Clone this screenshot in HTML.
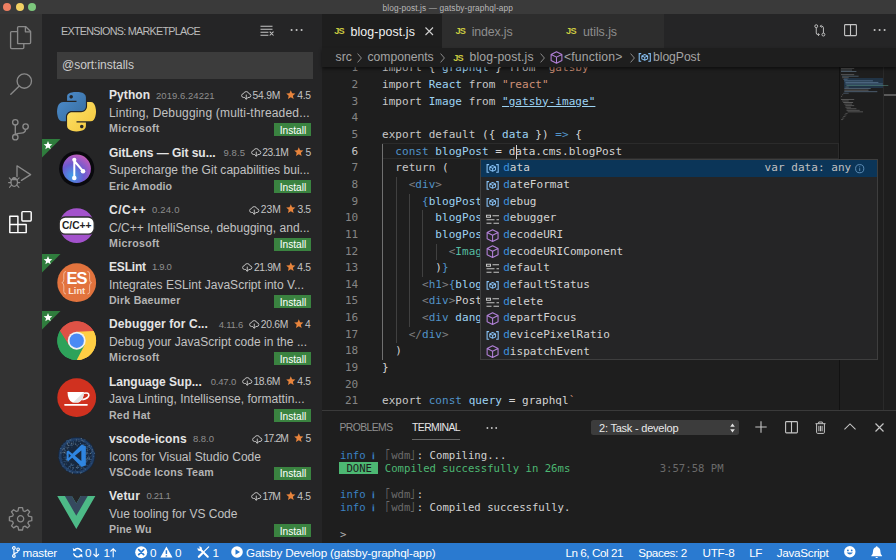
<!DOCTYPE html>
<html><head><meta charset="utf-8"><title>blog-post.js — gatsby-graphql-app</title>
<style>
*{box-sizing:border-box;margin:0;padding:0}
html,body{width:896px;height:560px;overflow:hidden;background:#1e1e1e}
body{position:relative;font-family:"Liberation Sans",sans-serif;color:#ccc;font-size:11px}
.abs,.t{position:absolute}
.t{white-space:pre;display:block}
svg{position:absolute;overflow:visible}
#title{left:0;top:0;width:896px;height:14px;background:#3a3a3a}
.dot{position:absolute;top:3.100px;width:8.300px;height:8.300px;border-radius:50%}
#act{left:0;top:14px;width:42px;height:529px;background:#333333}
#side{left:42px;top:14px;width:279.800px;height:529px;background:#252526}
#tabs{left:321.800px;top:14px;width:574.200px;height:34px;background:#252526}
.tab{position:absolute;top:14px;height:34px;background:#2d2d2d}
#bc{left:321.800px;top:48px;width:574.200px;height:19px;background:#1e1e1e;z-index:5;box-shadow:0 2px 3px rgba(0,0,0,.5)}
#status{left:0;top:542.600px;width:896px;height:17.400px;background:#2a7ad0}
#code{left:321.800px;top:66px;width:574.200px;height:344px;overflow:hidden;background:#1e1e1e}
</style></head><body>
<div id="title" class="abs">
<div class="dot" style="left:2.650px;background:#ee7f62"></div>
<div class="dot" style="left:15.750px;background:#f2d163"></div>
<div class="dot" style="left:28.100px;background:#7cc77c"></div>
<span class="t" style="left:382.5px;top:3.4px;font-size:8.3px;line-height:10.8px;height:10.8px;letter-spacing:0.111px;color:#b8b8b8;">blog-post.js — gatsby-graphql-app</span>
</div>
<div id="act" class="abs"></div><svg style="left:0;top:0" width="42" height="560" viewBox="0 0 42 560" fill="none" stroke="#8a8a8a" stroke-width="1.35" stroke-linejoin="round" stroke-linecap="round">
<!-- files -->
<path d="M17.6 43.6 V27.6 Q17.6 26.6 18.6 26.6 H25.6 L30.6 31.6 V42.6 Q30.6 43.6 29.6 43.6 Z"/>
<path d="M25.4 26.8 V31.8 H30.4"/>
<path d="M17.4 31.6 H11.6 Q10.6 31.6 10.6 32.6 V47.6 Q10.6 48.6 11.6 48.6 H22.8 Q23.8 48.6 23.8 47.6 V43.8"/>
<!-- search -->
<circle cx="24.3" cy="81" r="7.2"/>
<path d="M19 86.2 L10.8 94.3"/>
<!-- git -->
<circle cx="15.3" cy="122.3" r="2.7"/>
<circle cx="15.3" cy="137.2" r="2.7"/>
<circle cx="25.6" cy="126.6" r="2.7"/>
<path d="M15.3 125 V134.5 M25.6 129.3 Q25.6 133 21 133.2 Q16.6 133.4 15.6 134.6"/>
<!-- debug -->
<path d="M17 176.5 V165.8 L30.6 174.6 L21.5 180.4"/>
<ellipse cx="14.2" cy="182.3" rx="3.3" ry="4.1"/>
<path d="M11.6 179.6 H16.8 M10.9 182.6 H8.6 M17.5 182.6 H19.8 M11.3 179.8 L9.3 177.8 M17.1 179.8 L19.1 177.8 M11.5 185.2 L9.5 187.3 M16.9 185.2 L18.9 187.3 M12.6 178.4 Q14.2 176.6 15.8 178.4" stroke-width="1.1"/>
<!-- extensions (active) -->
<g stroke="#ffffff" stroke-width="1.45">
<path d="M9.8 216.2 H17.9 V232.6 H9.8 Z M17.9 224.4 H26.2 V232.6 H17.9 M9.8 224.4 H17.9"/>
<rect x="21.9" y="211.6" width="9.3" height="9.3" rx="0.8"/>
</g>
<!-- gear -->
<g transform="translate(20.6 518.8)">
<path d="M-1.9 -11.2 H1.9 L2.6 -8 L4.3 -7.3 L7 -9.1 L9.1 -7 L7.3 -4.3 L8 -2.6 L11.2 -1.9 V1.9 L8 2.6 L7.3 4.3 L9.1 7 L7 9.1 L4.3 7.3 L2.6 8 L1.9 11.2 H-1.9 L-2.6 8 L-4.3 7.3 L-7 9.1 L-9.1 7 L-7.3 4.3 L-8 2.6 L-11.2 1.9 V-1.9 L-8 -2.6 L-7.3 -4.3 L-9.1 -7 L-7 -9.1 L-4.3 -7.3 L-2.6 -8 Z" stroke-width="1.3"/>
<circle cx="0" cy="0" r="3.1" stroke-width="1.3"/>
</g>
</svg>
<div id="side" class="abs"></div>
<span class="t" style="left:61.0px;top:24.3px;font-size:10.8px;line-height:14.0px;height:14.0px;letter-spacing:-0.739px;color:#bbbbbb;">EXTENSIONS: MARKETPLACE</span>
<svg style="left:260.300px;top:25.300px" width="14" height="12" viewBox="0 0 14 12" fill="none" stroke="#c5c5c5" stroke-width="1.05"><path d="M0.5 1.2 H12.5 M0.5 4.2 H12.5 M0.5 7.2 H8.4 M0.5 10.2 H8.4 M9.700 6.700 L13.500 10.500 M13.500 6.700 L9.700 10.500"/></svg>
<svg style="left:290.300px;top:28.300px" width="14" height="4" viewBox="0 0 14 4" fill="#c5c5c5"><circle cx="1.6" cy="2" r="1.05"/><circle cx="6.6" cy="2" r="1.05"/><circle cx="11.6" cy="2" r="1.05"/></svg>
<div class="abs" style="left:57px;top:52px;width:256px;height:27px;background:#3c3c3c"></div>
<span class="t" style="left:62.0px;top:58.0px;font-size:12px;line-height:15.6px;height:15.6px;letter-spacing:-0.015px;color:#cccccc;">@sort:installs</span>
<svg style="left:57px;top:91.5px" width="39" height="39" viewBox="0 0 111 111"><defs><linearGradient id="pyb" x1="0" y1="0" x2="1" y2="1"><stop offset="0" stop-color="#4f8fcf"/><stop offset="1" stop-color="#356a9c"/></linearGradient><linearGradient id="pyy" x1="0" y1="0" x2="1" y2="1"><stop offset="0" stop-color="#ffe36a"/><stop offset="1" stop-color="#f2c53a"/></linearGradient></defs>
<path fill="url(#pyb)" d="M54.9 0c-4.6 0-9 .4-12.8 1.100C30.800 3.100 28.700 7.300 28.700 15v10.200h26.800v3.400H18.700c-7.800 0-14.600 4.700-16.700 13.600-2.500 10.200-2.600 16.600 0 27.200 1.900 7.900 6.400 13.600 14.200 13.600h9.200V70.800c0-8.800 7.600-16.600 16.700-16.600h26.800c7.400 0 13.400-6.100 13.400-13.600V15c0-7.300-6.100-12.700-13.400-13.900C64.300.3 59.500 0 54.900 0zM40.400 8.200c2.800 0 5 2.300 5 5.100 0 2.800-2.300 5.100-5 5.100-2.800 0-5-2.300-5-5.100 0-2.800 2.200-5.100 5-5.100z"/>
<path fill="url(#pyy)" d="M85.600 28.700v11.900c0 9.200-7.800 17-16.700 17H42.100c-7.300 0-13.400 6.300-13.400 13.600v25.500c0 7.300 6.300 11.500 13.400 13.600 8.500 2.500 16.600 2.900 26.800 0 6.700-1.900 13.400-5.900 13.400-13.600V86.500H55.500v-3.400h40.200c7.800 0 10.700-5.400 13.400-13.600 2.800-8.400 2.700-16.500 0-27.200-1.900-7.700-5.600-13.600-13.400-13.600H85.600zM70.500 93.300c2.800 0 5 2.300 5 5.100 0 2.800-2.300 5.100-5 5.100-2.800 0-5-2.300-5-5.100 0-2.800 2.300-5.100 5-5.100z"/></svg>
<span class="t" style="left:109.0px;top:88.3px;font-size:12px;line-height:15.6px;height:15.6px;letter-spacing:0.088px;color:#e4e4e4;font-weight:bold;">Python</span>
<span class="t" style="left:156.0px;top:89.6px;font-size:9.5px;line-height:12.3px;height:12.3px;letter-spacing:0.048px;color:#8e8e8e;">2019.6.24221</span>
<svg style="left:241px;top:91.1px" width="10.500" height="9" viewBox="0 0 21 18" fill="none" stroke="#c8c8c8" stroke-width="1.900" stroke-linecap="round" stroke-linejoin="round"><path d="M6.500 13 H5 Q1.200 12.600 1.200 9 Q1.400 5.600 5 5.300 Q6.300 1.200 10.500 1.200 Q14.800 1.300 16 5.500 Q19.800 5.800 19.800 9.300 Q19.600 12.700 16 13 H14.500"/><path d="M10.500 8 V16 M7.500 13.300 L10.500 16.500 L13.500 13.300"/></svg>
<span class="t" style="left:252.5px;top:88.9px;font-size:10.3px;line-height:13.4px;height:13.4px;letter-spacing:-0.185px;color:#c4c4c4;">54.9M</span>
<svg style="left:285.5px;top:89.9px" width="9.600" height="9.200" viewBox="0 0 24 23"><path d="M12 0.500 L15.300 8 L23.500 8.800 L17.300 14.300 L19.100 22.400 L12 18.200 L4.900 22.400 L6.700 14.300 L0.500 8.800 L8.700 8 Z" fill="#e8843c"/></svg>
<span class="t" style="left:297.2px;top:88.9px;font-size:10.3px;line-height:13.4px;height:13.4px;letter-spacing:-0.276px;color:#c4c4c4;">4.5</span>
<span class="t" style="left:109.0px;top:106.2px;font-size:12px;line-height:15.6px;height:15.6px;letter-spacing:0.178px;color:#c2c2c2;">Linting, Debugging (multi-threaded...</span>
<span class="t" style="left:109.0px;top:122.3px;font-size:10.6px;line-height:13.8px;height:13.8px;letter-spacing:0.336px;color:#b4b4b4;font-weight:bold;">Microsoft</span>
<div class="abs" style="left:274.2px;top:123.2px;width:36.800px;height:13px;background:#3a8340"></div>
<span class="t" style="left:279.7px;top:123.8px;font-size:10.2px;line-height:13.3px;height:13.3px;letter-spacing:-0.018px;color:#ffffff;">Install</span>
<svg style="left:57px;top:148.8px" width="39" height="39" viewBox="0 0 39 39"><defs><radialGradient id="gl1" cx="0.35" cy="0.75" r="0.9"><stop offset="0" stop-color="#3fa0e8"/><stop offset="0.45" stop-color="#6a5bd0"/><stop offset="0.8" stop-color="#b05ac0"/><stop offset="1" stop-color="#d873b0"/></radialGradient></defs>
<circle cx="19.7" cy="19.8" r="17.6" fill="#09090d"/><circle cx="19.7" cy="19.8" r="14.2" fill="url(#gl1)"/>
<g stroke="#ffffff" stroke-width="2" fill="none" stroke-linecap="round"><path d="M17.300 11.500 V28.500 M17.300 12 L25.500 21.500"/></g>
<circle cx="17.300" cy="10.800" r="2.100" fill="#fff"/><circle cx="17.300" cy="29" r="2.300" fill="#fff"/><circle cx="26" cy="22.300" r="2.300" fill="#fff"/></svg>
<svg style="left:42px;top:139.4px" width="19" height="19" viewBox="0 0 19 19"><path d="M0 0 H18.500 L0 18.500 Z" fill="#2f7d3d"/><path transform="translate(6.000 6.500) scale(0.42)" d="M0 -10.500 L2.900 -3.600 L10.300 -3.100 L4.600 1.700 L6.400 9 L0 5 L-6.400 9 L-4.600 1.700 L-10.300 -3.100 L-2.900 -3.600 Z" fill="#fff"/></svg>
<span class="t" style="left:109.0px;top:145.5px;font-size:12px;line-height:15.6px;height:15.6px;letter-spacing:-0.044px;color:#e4e4e4;font-weight:bold;">GitLens — Git su...</span>
<span class="t" style="left:223.5px;top:146.8px;font-size:9.5px;line-height:12.3px;height:12.3px;letter-spacing:0.072px;color:#8e8e8e;">9.8.5</span>
<svg style="left:251px;top:148.3px" width="10.500" height="9" viewBox="0 0 21 18" fill="none" stroke="#c8c8c8" stroke-width="1.900" stroke-linecap="round" stroke-linejoin="round"><path d="M6.500 13 H5 Q1.200 12.600 1.200 9 Q1.400 5.600 5 5.300 Q6.300 1.200 10.500 1.200 Q14.800 1.300 16 5.500 Q19.800 5.800 19.800 9.300 Q19.600 12.700 16 13 H14.500"/><path d="M10.500 8 V16 M7.500 13.300 L10.500 16.500 L13.500 13.300"/></svg>
<span class="t" style="left:262.2px;top:146.2px;font-size:10.3px;line-height:13.4px;height:13.4px;letter-spacing:-0.465px;color:#c4c4c4;">23.1M</span>
<svg style="left:294.2px;top:147.2px" width="9.600" height="9.200" viewBox="0 0 24 23"><path d="M12 0.500 L15.300 8 L23.500 8.800 L17.300 14.300 L19.100 22.400 L12 18.200 L4.900 22.400 L6.700 14.300 L0.500 8.800 L8.700 8 Z" fill="#e8843c"/></svg>
<span class="t" style="left:305.5px;top:146.2px;font-size:10.3px;line-height:13.4px;height:13.4px;letter-spacing:-0.534px;color:#c4c4c4;">5</span>
<span class="t" style="left:109.0px;top:163.4px;font-size:12px;line-height:15.6px;height:15.6px;letter-spacing:0.032px;color:#c2c2c2;">Supercharge the Git capabilities bui...</span>
<span class="t" style="left:109.0px;top:179.5px;font-size:10.6px;line-height:13.8px;height:13.8px;letter-spacing:0.108px;color:#b4b4b4;font-weight:bold;">Eric Amodio</span>
<div class="abs" style="left:274.2px;top:180.4px;width:36.800px;height:13px;background:#3a8340"></div>
<span class="t" style="left:279.7px;top:181.0px;font-size:10.2px;line-height:13.3px;height:13.3px;letter-spacing:-0.018px;color:#ffffff;">Install</span>
<svg style="left:57px;top:206.0px" width="39" height="39" viewBox="0 0 39 39"><circle cx="19.7" cy="19.600" r="17.400" fill="#a352cc"/>
<rect x="2.200" y="11" width="35" height="17.200" rx="6" fill="#ffffff" stroke="#2b2b2b" stroke-width="1.300"/>
<text x="19.700" y="23.300" text-anchor="middle" font-family="Liberation Sans,sans-serif" font-weight="bold" font-size="10.400" fill="#222" textLength="29.500" lengthAdjust="spacingAndGlyphs">C/C++</text></svg>
<span class="t" style="left:109.0px;top:202.8px;font-size:12px;line-height:15.6px;height:15.6px;letter-spacing:0.503px;color:#e4e4e4;font-weight:bold;">C/C++</span>
<span class="t" style="left:152.0px;top:204.1px;font-size:9.5px;line-height:12.3px;height:12.3px;letter-spacing:0.213px;color:#8e8e8e;">0.24.0</span>
<svg style="left:249px;top:205.6px" width="10.500" height="9" viewBox="0 0 21 18" fill="none" stroke="#c8c8c8" stroke-width="1.900" stroke-linecap="round" stroke-linejoin="round"><path d="M6.500 13 H5 Q1.200 12.600 1.200 9 Q1.400 5.600 5 5.300 Q6.300 1.200 10.500 1.200 Q14.800 1.300 16 5.500 Q19.800 5.800 19.800 9.300 Q19.600 12.700 16 13 H14.500"/><path d="M10.500 8 V16 M7.500 13.300 L10.500 16.500 L13.500 13.300"/></svg>
<span class="t" style="left:260.8px;top:203.4px;font-size:10.3px;line-height:13.4px;height:13.4px;letter-spacing:-0.044px;color:#c4c4c4;">23M</span>
<svg style="left:286.0px;top:204.4px" width="9.600" height="9.200" viewBox="0 0 24 23"><path d="M12 0.500 L15.300 8 L23.500 8.800 L17.300 14.300 L19.100 22.400 L12 18.200 L4.900 22.400 L6.700 14.300 L0.500 8.800 L8.700 8 Z" fill="#e8843c"/></svg>
<span class="t" style="left:297.6px;top:203.4px;font-size:10.3px;line-height:13.4px;height:13.4px;letter-spacing:-0.409px;color:#c4c4c4;">3.5</span>
<span class="t" style="left:109.0px;top:220.7px;font-size:12px;line-height:15.6px;height:15.6px;letter-spacing:0.033px;color:#c2c2c2;">C/C++ IntelliSense, debugging, and...</span>
<span class="t" style="left:109.0px;top:236.8px;font-size:10.6px;line-height:13.8px;height:13.8px;letter-spacing:0.336px;color:#b4b4b4;font-weight:bold;">Microsoft</span>
<div class="abs" style="left:274.2px;top:237.7px;width:36.800px;height:13px;background:#3a8340"></div>
<span class="t" style="left:279.7px;top:238.3px;font-size:10.2px;line-height:13.3px;height:13.3px;letter-spacing:-0.018px;color:#ffffff;">Install</span>
<svg style="left:57px;top:263.2px" width="39" height="39" viewBox="0 0 39 39"><circle cx="19.700" cy="19.700" r="19.400" fill="#e2733d"/>
<text x="19.400" y="20.600" text-anchor="middle" font-family="Liberation Sans,sans-serif" font-weight="bold" font-size="16.500" fill="#fff" letter-spacing="-1.200">ES</text>
<text x="19.700" y="31.300" text-anchor="middle" font-family="Liberation Sans,sans-serif" font-weight="bold" font-size="9.300" fill="#fbe3d6">Lint</text>
<g fill="none" stroke="#f3b79a" stroke-width="1"><path d="M9 8.500 Q6.800 8.500 6.800 11 V16.500 Q6.800 19.500 4.800 19.700 Q6.800 19.900 6.800 23 V28.500 Q6.800 31 9 31"/><path d="M30.400 8.500 Q32.600 8.500 32.600 11 V16.500 Q32.600 19.500 34.600 19.700 Q32.600 19.900 32.600 23 V28.500 Q32.600 31 30.400 31"/></g></svg>
<svg style="left:42px;top:253.9px" width="19" height="19" viewBox="0 0 19 19"><path d="M0 0 H18.500 L0 18.500 Z" fill="#2f7d3d"/><path transform="translate(6.000 6.500) scale(0.42)" d="M0 -10.500 L2.900 -3.600 L10.300 -3.100 L4.600 1.700 L6.400 9 L0 5 L-6.400 9 L-4.600 1.700 L-10.300 -3.100 L-2.900 -3.600 Z" fill="#fff"/></svg>
<span class="t" style="left:109.0px;top:260.0px;font-size:12px;line-height:15.6px;height:15.6px;letter-spacing:-0.183px;color:#e4e4e4;font-weight:bold;">ESLint</span>
<span class="t" style="left:152.0px;top:261.4px;font-size:9.5px;line-height:12.3px;height:12.3px;letter-spacing:-0.308px;color:#8e8e8e;">1.9.0</span>
<svg style="left:242px;top:262.9px" width="10.500" height="9" viewBox="0 0 21 18" fill="none" stroke="#c8c8c8" stroke-width="1.900" stroke-linecap="round" stroke-linejoin="round"><path d="M6.500 13 H5 Q1.200 12.600 1.200 9 Q1.400 5.600 5 5.300 Q6.300 1.200 10.500 1.200 Q14.800 1.300 16 5.500 Q19.800 5.800 19.800 9.300 Q19.600 12.700 16 13 H14.500"/><path d="M10.500 8 V16 M7.500 13.300 L10.500 16.500 L13.500 13.300"/></svg>
<span class="t" style="left:254.0px;top:260.7px;font-size:10.3px;line-height:13.4px;height:13.4px;letter-spacing:-0.385px;color:#c4c4c4;">21.9M</span>
<svg style="left:286.0px;top:261.6px" width="9.600" height="9.200" viewBox="0 0 24 23"><path d="M12 0.500 L15.300 8 L23.500 8.800 L17.300 14.300 L19.100 22.400 L12 18.200 L4.900 22.400 L6.700 14.300 L0.500 8.800 L8.700 8 Z" fill="#e8843c"/></svg>
<span class="t" style="left:297.2px;top:260.7px;font-size:10.3px;line-height:13.4px;height:13.4px;letter-spacing:-0.276px;color:#c4c4c4;">4.5</span>
<span class="t" style="left:109.0px;top:277.9px;font-size:12px;line-height:15.6px;height:15.6px;letter-spacing:0.017px;color:#c2c2c2;">Integrates ESLint JavaScript into V...</span>
<span class="t" style="left:109.0px;top:294.0px;font-size:10.6px;line-height:13.8px;height:13.8px;letter-spacing:0.217px;color:#b4b4b4;font-weight:bold;">Dirk Baeumer</span>
<div class="abs" style="left:274.2px;top:294.9px;width:36.800px;height:13px;background:#3a8340"></div>
<span class="t" style="left:279.7px;top:295.5px;font-size:10.2px;line-height:13.3px;height:13.3px;letter-spacing:-0.018px;color:#ffffff;">Install</span>
<svg style="left:57px;top:320.5px" width="39" height="39" viewBox="0 0 39 39"><path d="M19.7 19.7 L2.90 10.00 A19.4 19.4 0 0 1 36.50 10.00 Z" fill="#de5246"/><path d="M19.7 19.7 L36.50 10.00 A19.4 19.4 0 0 1 19.70 39.10 Z" fill="#ffce44"/><path d="M19.7 19.7 L19.70 39.10 A19.4 19.4 0 0 1 2.90 10.00 Z" fill="#2ea25a"/><path d="M2.90 10.00 L2.90 10.00 L11.91 24.20 L19.70 10.70 L36.50 10.00 A19.4 19.4 0 0 0 2.90 10.00Z" fill="#de5246"/><path d="M36.50 10.00 L19.70 10.70 L19.70 10.70 L27.49 24.20 L19.70 39.10 A19.4 19.4 0 0 0 36.50 10.00Z" fill="#ffce44"/><path d="M19.70 39.10 L27.49 24.20 L11.91 24.20 L2.90 10.00 A19.4 19.4 0 0 0 19.70 39.10Z" fill="#2ea25a"/><circle cx="19.7" cy="19.7" r="9" fill="#f1f1f1"/><circle cx="19.7" cy="19.7" r="7.200" fill="#4a8af4"/></svg>
<svg style="left:42px;top:311.2px" width="19" height="19" viewBox="0 0 19 19"><path d="M0 0 H18.500 L0 18.500 Z" fill="#2f7d3d"/><path transform="translate(6.000 6.500) scale(0.42)" d="M0 -10.500 L2.900 -3.600 L10.300 -3.100 L4.600 1.700 L6.400 9 L0 5 L-6.400 9 L-4.600 1.700 L-10.300 -3.100 L-2.900 -3.600 Z" fill="#fff"/></svg>
<span class="t" style="left:109.0px;top:317.3px;font-size:12px;line-height:15.6px;height:15.6px;letter-spacing:0.097px;color:#e4e4e4;font-weight:bold;">Debugger for C...</span>
<span class="t" style="left:218.8px;top:318.6px;font-size:9.5px;line-height:12.3px;height:12.3px;letter-spacing:-0.253px;color:#8e8e8e;">4.11.6</span>
<svg style="left:249.4px;top:320.1px" width="10.500" height="9" viewBox="0 0 21 18" fill="none" stroke="#c8c8c8" stroke-width="1.900" stroke-linecap="round" stroke-linejoin="round"><path d="M6.500 13 H5 Q1.200 12.600 1.200 9 Q1.400 5.600 5 5.300 Q6.300 1.200 10.500 1.200 Q14.800 1.300 16 5.500 Q19.800 5.800 19.800 9.300 Q19.600 12.700 16 13 H14.500"/><path d="M10.500 8 V16 M7.500 13.300 L10.500 16.500 L13.500 13.300"/></svg>
<span class="t" style="left:260.8px;top:317.9px;font-size:10.3px;line-height:13.4px;height:13.4px;letter-spacing:-0.285px;color:#c4c4c4;">20.6M</span>
<svg style="left:294.2px;top:318.9px" width="9.600" height="9.200" viewBox="0 0 24 23"><path d="M12 0.500 L15.300 8 L23.500 8.800 L17.300 14.300 L19.100 22.400 L12 18.200 L4.900 22.400 L6.700 14.300 L0.500 8.800 L8.700 8 Z" fill="#e8843c"/></svg>
<span class="t" style="left:305.0px;top:317.9px;font-size:10.3px;line-height:13.4px;height:13.4px;letter-spacing:-0.034px;color:#c4c4c4;">4</span>
<span class="t" style="left:109.0px;top:335.2px;font-size:12px;line-height:15.6px;height:15.6px;letter-spacing:0.033px;color:#c2c2c2;">Debug your JavaScript code in the ...</span>
<span class="t" style="left:109.0px;top:351.3px;font-size:10.6px;line-height:13.8px;height:13.8px;letter-spacing:0.336px;color:#b4b4b4;font-weight:bold;">Microsoft</span>
<div class="abs" style="left:274.2px;top:352.2px;width:36.800px;height:13px;background:#3a8340"></div>
<span class="t" style="left:279.7px;top:352.8px;font-size:10.2px;line-height:13.3px;height:13.3px;letter-spacing:-0.018px;color:#ffffff;">Install</span>
<svg style="left:57px;top:377.8px" width="39" height="39" viewBox="0 0 39 39"><circle cx="19.700" cy="19.700" r="19.400" fill="#d0311f"/>
<path d="M10.500 14 H27 Q26.800 22.500 21.500 24.500 H15.500 Q10.700 22.500 10.500 14 Z" fill="#fff"/>
<path d="M26.800 15.200 Q32.200 14.200 31.800 17.500 Q31.200 20.500 25.300 21.600" fill="none" stroke="#fff" stroke-width="1.600"/>
<path d="M8 26.800 H30" stroke="#fff" stroke-width="1.700" stroke-linecap="round"/>
<path d="M21 24.500 Q26.300 22 27 14 L16 24.500Z" fill="#e4e4e4"/></svg>
<span class="t" style="left:109.0px;top:374.5px;font-size:12px;line-height:15.6px;height:15.6px;letter-spacing:0.009px;color:#e4e4e4;font-weight:bold;">Language Sup...</span>
<span class="t" style="left:210.7px;top:375.9px;font-size:9.5px;line-height:12.3px;height:12.3px;letter-spacing:-0.187px;color:#8e8e8e;">0.47.0</span>
<svg style="left:242px;top:377.4px" width="10.500" height="9" viewBox="0 0 21 18" fill="none" stroke="#c8c8c8" stroke-width="1.900" stroke-linecap="round" stroke-linejoin="round"><path d="M6.500 13 H5 Q1.200 12.600 1.200 9 Q1.400 5.600 5 5.300 Q6.300 1.200 10.500 1.200 Q14.800 1.300 16 5.500 Q19.800 5.800 19.800 9.300 Q19.600 12.700 16 13 H14.500"/><path d="M10.500 8 V16 M7.500 13.300 L10.500 16.500 L13.500 13.300"/></svg>
<span class="t" style="left:253.4px;top:375.2px;font-size:10.3px;line-height:13.4px;height:13.4px;letter-spacing:-0.405px;color:#c4c4c4;">18.6M</span>
<svg style="left:286.0px;top:376.1px" width="9.600" height="9.200" viewBox="0 0 24 23"><path d="M12 0.500 L15.300 8 L23.500 8.800 L17.300 14.300 L19.100 22.400 L12 18.200 L4.900 22.400 L6.700 14.300 L0.500 8.800 L8.700 8 Z" fill="#e8843c"/></svg>
<span class="t" style="left:297.2px;top:375.2px;font-size:10.3px;line-height:13.4px;height:13.4px;letter-spacing:-0.276px;color:#c4c4c4;">4.5</span>
<span class="t" style="left:109.0px;top:392.4px;font-size:12px;line-height:15.6px;height:15.6px;letter-spacing:0.035px;color:#c2c2c2;">Java Linting, Intellisense, formattin...</span>
<span class="t" style="left:109.0px;top:408.5px;font-size:10.6px;line-height:13.8px;height:13.8px;letter-spacing:0.210px;color:#b4b4b4;font-weight:bold;">Red Hat</span>
<div class="abs" style="left:274.2px;top:409.4px;width:36.800px;height:13px;background:#3a8340"></div>
<span class="t" style="left:279.7px;top:410.0px;font-size:10.2px;line-height:13.3px;height:13.3px;letter-spacing:-0.018px;color:#ffffff;">Install</span>
<svg style="left:57px;top:435.9px" width="39" height="39" viewBox="0 0 39 39"><circle cx="19.700" cy="19.700" r="18.600" fill="#17283f"/><circle cx="19.700" cy="19.700" r="16.500" fill="none" stroke="#2a5288" stroke-width="2.500" opacity="0.550"/><circle cx="20.6" cy="30.0" r="0.52" fill="#6d7a84"/><circle cx="27.9" cy="24.9" r="0.67" fill="#41658c"/><circle cx="24.7" cy="4.5" r="0.53" fill="#5b6f80"/><circle cx="9.4" cy="32.1" r="0.44" fill="#3a5f86"/><circle cx="28.8" cy="16.3" r="0.63" fill="#2f4d70"/><circle cx="23.9" cy="31.1" r="0.38" fill="#2f4d70"/><circle cx="7.7" cy="10.3" r="0.44" fill="#41658c"/><circle cx="19.9" cy="31.6" r="0.64" fill="#41658c"/><circle cx="31.7" cy="20.2" r="0.65" fill="#2f4d70"/><circle cx="6.7" cy="19.0" r="0.45" fill="#41658c"/><circle cx="8.7" cy="23.2" r="0.63" fill="#2f4d70"/><circle cx="29.2" cy="22.4" r="0.53" fill="#2f4d70"/><circle cx="10.5" cy="7.3" r="0.70" fill="#5b6f80"/><circle cx="24.1" cy="32.0" r="0.57" fill="#5b6f80"/><circle cx="9.4" cy="23.7" r="0.61" fill="#6d7a84"/><circle cx="13.6" cy="32.6" r="0.39" fill="#2f4d70"/><circle cx="30.3" cy="24.0" r="0.57" fill="#41658c"/><circle cx="20.7" cy="32.0" r="0.45" fill="#5b6f80"/><circle cx="32.1" cy="21.7" r="0.66" fill="#3a5f86"/><circle cx="34.8" cy="15.3" r="0.36" fill="#2f4d70"/><circle cx="15.4" cy="36.9" r="0.65" fill="#6d7a84"/><circle cx="30.1" cy="8.5" r="0.45" fill="#3a5f86"/><circle cx="24.5" cy="32.1" r="0.44" fill="#5b6f80"/><circle cx="10.9" cy="13.4" r="0.35" fill="#41658c"/><circle cx="30.2" cy="22.7" r="0.70" fill="#2f4d70"/><circle cx="7.8" cy="14.0" r="0.50" fill="#5b6f80"/><circle cx="22.3" cy="29.4" r="0.61" fill="#3a5f86"/><circle cx="5.1" cy="9.7" r="0.36" fill="#41658c"/><circle cx="8.1" cy="20.4" r="0.39" fill="#3a5f86"/><circle cx="3.9" cy="16.8" r="0.58" fill="#6d7a84"/><circle cx="23.1" cy="30.4" r="0.49" fill="#6d7a84"/><circle cx="32.4" cy="22.7" r="0.58" fill="#5b6f80"/><circle cx="9.5" cy="24.7" r="0.36" fill="#5b6f80"/><circle cx="19.4" cy="31.3" r="0.62" fill="#5b6f80"/><circle cx="9.5" cy="25.5" r="0.37" fill="#2f4d70"/><circle cx="32.6" cy="13.4" r="0.49" fill="#41658c"/><circle cx="31.9" cy="10.9" r="0.52" fill="#3a5f86"/><circle cx="29.1" cy="25.9" r="0.66" fill="#41658c"/><circle cx="30.7" cy="14.1" r="0.63" fill="#6d7a84"/><circle cx="9.4" cy="6.9" r="0.43" fill="#41658c"/><circle cx="24.9" cy="4.2" r="0.67" fill="#2f4d70"/><circle cx="29.5" cy="17.0" r="0.69" fill="#2f4d70"/><circle cx="14.9" cy="11.1" r="0.39" fill="#41658c"/><circle cx="34.6" cy="16.7" r="0.65" fill="#3a5f86"/><circle cx="14.6" cy="7.3" r="0.61" fill="#6d7a84"/><circle cx="29.9" cy="14.7" r="0.42" fill="#3a5f86"/><circle cx="27.8" cy="31.9" r="0.39" fill="#2f4d70"/><circle cx="25.6" cy="4.7" r="0.54" fill="#5b6f80"/><circle cx="27.8" cy="12.0" r="0.47" fill="#41658c"/><circle cx="32.2" cy="9.6" r="0.67" fill="#6d7a84"/><circle cx="10.3" cy="23.5" r="0.39" fill="#41658c"/><circle cx="8.9" cy="15.3" r="0.36" fill="#5b6f80"/><circle cx="34.6" cy="27.8" r="0.45" fill="#3a5f86"/><circle cx="13.9" cy="28.0" r="0.51" fill="#41658c"/><circle cx="24.6" cy="36.8" r="0.43" fill="#6d7a84"/><circle cx="2.0" cy="21.2" r="0.38" fill="#3a5f86"/><circle cx="33.8" cy="11.5" r="0.53" fill="#2f4d70"/><circle cx="4.3" cy="26.5" r="0.37" fill="#6d7a84"/><circle cx="27.9" cy="12.1" r="0.68" fill="#2f4d70"/><circle cx="9.3" cy="21.1" r="0.41" fill="#41658c"/><circle cx="27.4" cy="11.9" r="0.46" fill="#5b6f80"/><circle cx="27.1" cy="10.7" r="0.60" fill="#3a5f86"/><circle cx="31.8" cy="20.1" r="0.39" fill="#41658c"/><circle cx="23.0" cy="5.5" r="0.38" fill="#41658c"/><circle cx="20.2" cy="36.4" r="0.43" fill="#2f4d70"/><circle cx="26.8" cy="35.0" r="0.59" fill="#3a5f86"/><circle cx="10.3" cy="12.0" r="0.62" fill="#6d7a84"/><circle cx="3.8" cy="12.4" r="0.63" fill="#41658c"/><circle cx="9.6" cy="11.1" r="0.44" fill="#5b6f80"/><circle cx="5.0" cy="9.5" r="0.40" fill="#2f4d70"/><circle cx="29.0" cy="25.0" r="0.41" fill="#41658c"/><circle cx="30.0" cy="12.4" r="0.63" fill="#41658c"/><circle cx="12.0" cy="4.5" r="0.49" fill="#3a5f86"/><circle cx="29.9" cy="15.4" r="0.46" fill="#2f4d70"/><circle cx="16.7" cy="28.9" r="0.53" fill="#3a5f86"/><circle cx="20.0" cy="9.5" r="0.63" fill="#2f4d70"/><circle cx="30.1" cy="16.6" r="0.70" fill="#41658c"/><circle cx="10.2" cy="4.5" r="0.62" fill="#3a5f86"/><circle cx="30.0" cy="17.6" r="0.59" fill="#6d7a84"/><circle cx="19.3" cy="5.0" r="0.65" fill="#2f4d70"/><circle cx="13.2" cy="4.0" r="0.66" fill="#5b6f80"/><circle cx="16.2" cy="8.1" r="0.61" fill="#5b6f80"/><circle cx="6.1" cy="16.5" r="0.66" fill="#6d7a84"/><circle cx="9.2" cy="27.3" r="0.45" fill="#2f4d70"/><circle cx="11.5" cy="24.8" r="0.66" fill="#5b6f80"/><circle cx="5.9" cy="23.4" r="0.49" fill="#2f4d70"/><circle cx="12.3" cy="26.0" r="0.37" fill="#41658c"/><circle cx="37.4" cy="16.8" r="0.56" fill="#2f4d70"/><circle cx="15.8" cy="29.2" r="0.52" fill="#2f4d70"/><circle cx="11.1" cy="9.3" r="0.62" fill="#41658c"/><circle cx="26.5" cy="29.0" r="0.40" fill="#2f4d70"/><circle cx="32.0" cy="23.4" r="0.59" fill="#41658c"/><circle cx="2.8" cy="14.5" r="0.36" fill="#2f4d70"/><circle cx="20.2" cy="35.6" r="0.36" fill="#5b6f80"/><circle cx="15.4" cy="29.3" r="0.66" fill="#3a5f86"/><circle cx="10.6" cy="8.2" r="0.61" fill="#5b6f80"/><circle cx="9.8" cy="5.1" r="0.55" fill="#3a5f86"/><circle cx="14.3" cy="5.0" r="0.40" fill="#41658c"/><circle cx="10.1" cy="25.7" r="0.52" fill="#2f4d70"/><circle cx="29.7" cy="24.2" r="0.53" fill="#2f4d70"/><circle cx="8.0" cy="16.9" r="0.46" fill="#6d7a84"/><circle cx="9.8" cy="28.2" r="0.45" fill="#3a5f86"/><circle cx="14.3" cy="8.9" r="0.38" fill="#5b6f80"/><circle cx="30.7" cy="29.5" r="0.43" fill="#3a5f86"/><circle cx="6.9" cy="15.2" r="0.41" fill="#41658c"/><circle cx="27.9" cy="3.7" r="0.47" fill="#6d7a84"/><circle cx="26.2" cy="32.1" r="0.39" fill="#5b6f80"/><circle cx="7.1" cy="8.0" r="0.68" fill="#2f4d70"/><circle cx="26.1" cy="8.4" r="0.64" fill="#3a5f86"/><circle cx="23.1" cy="33.7" r="0.46" fill="#41658c"/><circle cx="31.4" cy="10.7" r="0.63" fill="#2f4d70"/><circle cx="29.7" cy="25.5" r="0.66" fill="#2f4d70"/><circle cx="11.3" cy="6.8" r="0.46" fill="#41658c"/><circle cx="2.3" cy="22.3" r="0.41" fill="#3a5f86"/><circle cx="33.1" cy="23.4" r="0.60" fill="#41658c"/><circle cx="34.5" cy="23.4" r="0.62" fill="#2f4d70"/><circle cx="32.6" cy="11.3" r="0.53" fill="#3a5f86"/><circle cx="32.3" cy="9.1" r="0.38" fill="#3a5f86"/><circle cx="21.5" cy="31.4" r="0.66" fill="#3a5f86"/><circle cx="29.2" cy="18.1" r="0.42" fill="#5b6f80"/><circle cx="19.8" cy="35.5" r="0.64" fill="#2f4d70"/><circle cx="15.9" cy="31.9" r="0.49" fill="#41658c"/><circle cx="26.1" cy="31.8" r="0.61" fill="#3a5f86"/><circle cx="27.5" cy="10.6" r="0.63" fill="#2f4d70"/><circle cx="16.0" cy="7.0" r="0.43" fill="#5b6f80"/><circle cx="6.6" cy="21.5" r="0.47" fill="#2f4d70"/><circle cx="34.5" cy="10.1" r="0.46" fill="#6d7a84"/><circle cx="11.2" cy="11.7" r="0.38" fill="#41658c"/><circle cx="7.7" cy="28.1" r="0.56" fill="#5b6f80"/><circle cx="13.0" cy="35.8" r="0.57" fill="#5b6f80"/><circle cx="14.4" cy="3.1" r="0.58" fill="#2f4d70"/><circle cx="30.3" cy="11.0" r="0.58" fill="#3a5f86"/><circle cx="34.0" cy="20.4" r="0.41" fill="#5b6f80"/><circle cx="20.3" cy="36.4" r="0.63" fill="#3a5f86"/><circle cx="12.9" cy="35.2" r="0.58" fill="#41658c"/><circle cx="28.2" cy="14.1" r="0.66" fill="#5b6f80"/><circle cx="19.4" cy="3.8" r="0.59" fill="#5b6f80"/><circle cx="18.5" cy="34.2" r="0.61" fill="#2f4d70"/><circle cx="21.8" cy="3.2" r="0.41" fill="#5b6f80"/><circle cx="23.5" cy="36.9" r="0.59" fill="#5b6f80"/><circle cx="29.6" cy="18.4" r="0.60" fill="#2f4d70"/><circle cx="11.5" cy="5.2" r="0.65" fill="#3a5f86"/><circle cx="23.5" cy="7.4" r="0.54" fill="#41658c"/><circle cx="7.5" cy="16.5" r="0.64" fill="#6d7a84"/><circle cx="20.2" cy="9.9" r="0.48" fill="#5b6f80"/><circle cx="16.1" cy="31.8" r="0.68" fill="#5b6f80"/><circle cx="14.1" cy="8.2" r="0.60" fill="#41658c"/><circle cx="30.1" cy="15.9" r="0.41" fill="#2f4d70"/><circle cx="10.2" cy="17.6" r="0.42" fill="#3a5f86"/><circle cx="26.9" cy="5.7" r="0.52" fill="#41658c"/><circle cx="31.4" cy="22.8" r="0.41" fill="#6d7a84"/><circle cx="34.4" cy="19.3" r="0.47" fill="#2f4d70"/><circle cx="9.6" cy="23.2" r="0.61" fill="#3a5f86"/><circle cx="33.5" cy="12.4" r="0.39" fill="#5b6f80"/><circle cx="15.7" cy="33.4" r="0.52" fill="#3a5f86"/><circle cx="33.5" cy="17.4" r="0.64" fill="#5b6f80"/><circle cx="20.4" cy="32.0" r="0.60" fill="#3a5f86"/><circle cx="32.8" cy="21.6" r="0.40" fill="#41658c"/><circle cx="30.4" cy="22.6" r="0.43" fill="#2f4d70"/><circle cx="18.8" cy="5.6" r="0.41" fill="#2f4d70"/><circle cx="11.1" cy="32.3" r="0.58" fill="#41658c"/><circle cx="8.5" cy="14.2" r="0.47" fill="#41658c"/><circle cx="6.0" cy="16.4" r="0.55" fill="#2f4d70"/><circle cx="28.0" cy="8.8" r="0.38" fill="#3a5f86"/><circle cx="11.9" cy="11.7" r="0.40" fill="#5b6f80"/><circle cx="16.2" cy="5.6" r="0.54" fill="#3a5f86"/><circle cx="9.8" cy="34.1" r="0.62" fill="#3a5f86"/><circle cx="8.5" cy="11.1" r="0.57" fill="#2f4d70"/><circle cx="14.9" cy="36.0" r="0.42" fill="#2f4d70"/><circle cx="8.0" cy="21.7" r="0.66" fill="#3a5f86"/><circle cx="16.6" cy="32.4" r="0.47" fill="#3a5f86"/><circle cx="5.9" cy="9.2" r="0.38" fill="#2f4d70"/><circle cx="10.4" cy="23.8" r="0.63" fill="#6d7a84"/><circle cx="30.7" cy="22.0" r="0.64" fill="#5b6f80"/><circle cx="24.8" cy="36.2" r="0.70" fill="#3a5f86"/><circle cx="29.2" cy="20.3" r="0.53" fill="#2f4d70"/><circle cx="9.8" cy="18.1" r="0.57" fill="#41658c"/><circle cx="12.4" cy="6.8" r="0.59" fill="#41658c"/><circle cx="29.0" cy="23.5" r="0.50" fill="#5b6f80"/><circle cx="26.5" cy="27.5" r="0.46" fill="#41658c"/><circle cx="13.4" cy="29.7" r="0.55" fill="#41658c"/><circle cx="6.7" cy="12.6" r="0.68" fill="#41658c"/><circle cx="28.5" cy="33.1" r="0.58" fill="#41658c"/><circle cx="21.9" cy="5.3" r="0.53" fill="#5b6f80"/><circle cx="8.4" cy="17.1" r="0.51" fill="#41658c"/><circle cx="37.6" cy="17.5" r="0.54" fill="#41658c"/><circle cx="7.2" cy="12.7" r="0.44" fill="#5b6f80"/><circle cx="7.4" cy="12.2" r="0.68" fill="#41658c"/><circle cx="7.9" cy="23.4" r="0.41" fill="#2f4d70"/><circle cx="35.8" cy="15.3" r="0.54" fill="#5b6f80"/><circle cx="11.0" cy="11.8" r="0.46" fill="#5b6f80"/><circle cx="30.3" cy="7.4" r="0.57" fill="#2f4d70"/><circle cx="24.3" cy="32.1" r="0.36" fill="#2f4d70"/><circle cx="36.6" cy="20.3" r="0.66" fill="#3a5f86"/><circle cx="15.2" cy="9.6" r="0.48" fill="#5b6f80"/><circle cx="11.8" cy="9.6" r="0.68" fill="#6d7a84"/><circle cx="7.1" cy="25.4" r="0.63" fill="#2f4d70"/><circle cx="27.9" cy="25.4" r="0.49" fill="#3a5f86"/><circle cx="27.6" cy="32.8" r="0.55" fill="#3a5f86"/><circle cx="32.0" cy="17.7" r="0.66" fill="#2f4d70"/><circle cx="28.1" cy="28.9" r="0.62" fill="#3a5f86"/><circle cx="7.4" cy="13.7" r="0.50" fill="#41658c"/><circle cx="18.2" cy="7.0" r="0.51" fill="#3a5f86"/><circle cx="4.0" cy="17.2" r="0.45" fill="#3a5f86"/><circle cx="29.1" cy="29.2" r="0.62" fill="#2f4d70"/><circle cx="28.8" cy="11.5" r="0.66" fill="#2f4d70"/><circle cx="6.0" cy="30.2" r="0.63" fill="#3a5f86"/><circle cx="12.8" cy="30.4" r="0.64" fill="#41658c"/><circle cx="16.5" cy="6.9" r="0.66" fill="#2f4d70"/><circle cx="6.6" cy="12.9" r="0.45" fill="#6d7a84"/><circle cx="14.7" cy="28.1" r="0.56" fill="#5b6f80"/><circle cx="21.5" cy="8.4" r="0.47" fill="#41658c"/><circle cx="8.2" cy="25.8" r="0.52" fill="#3a5f86"/><circle cx="35.2" cy="13.8" r="0.62" fill="#6d7a84"/><circle cx="4.2" cy="22.7" r="0.42" fill="#2f4d70"/><circle cx="14.3" cy="29.1" r="0.60" fill="#41658c"/><circle cx="5.8" cy="13.8" r="0.62" fill="#6d7a84"/><circle cx="24.3" cy="2.6" r="0.61" fill="#6d7a84"/><circle cx="11.7" cy="31.0" r="0.61" fill="#3a5f86"/><circle cx="14.0" cy="9.5" r="0.59" fill="#41658c"/><circle cx="30.1" cy="10.3" r="0.51" fill="#3a5f86"/><circle cx="14.1" cy="6.5" r="0.37" fill="#5b6f80"/><circle cx="26.4" cy="5.1" r="0.46" fill="#5b6f80"/><circle cx="13.4" cy="31.4" r="0.45" fill="#5b6f80"/><circle cx="29.1" cy="23.2" r="0.39" fill="#6d7a84"/><circle cx="18.7" cy="8.2" r="0.63" fill="#6d7a84"/><circle cx="33.3" cy="25.4" r="0.42" fill="#5b6f80"/><circle cx="28.1" cy="8.7" r="0.43" fill="#5b6f80"/><circle cx="33.2" cy="20.9" r="0.44" fill="#2f4d70"/><circle cx="10.9" cy="25.6" r="0.58" fill="#2f4d70"/>
<path transform="translate(19.700 19.700) scale(1.130 1.200) translate(-19.400 -19.700)" d="M27.500 11.800 L23.800 10.300 L15.500 18 L12 15.300 L10.500 16.200 V23.200 L12 24.100 L15.500 21.400 L23.800 29.100 L27.500 27.600 Z M23.500 15.300 V24.100 L17.800 19.700 Z M12.300 17.800 L14.300 19.700 L12.300 21.600 Z" fill="#2f85e0" fill-rule="evenodd"/></svg>
<span class="t" style="left:109.0px;top:431.8px;font-size:12px;line-height:15.6px;height:15.6px;letter-spacing:0.083px;color:#e4e4e4;font-weight:bold;">vscode-icons</span>
<span class="t" style="left:193.0px;top:433.1px;font-size:9.5px;line-height:12.3px;height:12.3px;letter-spacing:-0.028px;color:#8e8e8e;">8.8.0</span>
<svg style="left:252px;top:434.6px" width="10.500" height="9" viewBox="0 0 21 18" fill="none" stroke="#c8c8c8" stroke-width="1.900" stroke-linecap="round" stroke-linejoin="round"><path d="M6.500 13 H5 Q1.200 12.600 1.200 9 Q1.400 5.600 5 5.300 Q6.300 1.200 10.500 1.200 Q14.800 1.300 16 5.500 Q19.800 5.800 19.800 9.300 Q19.600 12.700 16 13 H14.500"/><path d="M10.500 8 V16 M7.500 13.300 L10.500 16.500 L13.500 13.300"/></svg>
<span class="t" style="left:263.7px;top:432.4px;font-size:10.3px;line-height:13.4px;height:13.4px;letter-spacing:-0.865px;color:#c4c4c4;">17.2M</span>
<svg style="left:294.2px;top:433.4px" width="9.600" height="9.200" viewBox="0 0 24 23"><path d="M12 0.500 L15.300 8 L23.500 8.800 L17.300 14.300 L19.100 22.400 L12 18.200 L4.900 22.400 L6.700 14.300 L0.500 8.800 L8.700 8 Z" fill="#e8843c"/></svg>
<span class="t" style="left:305.5px;top:432.4px;font-size:10.3px;line-height:13.4px;height:13.4px;letter-spacing:-0.534px;color:#c4c4c4;">5</span>
<span class="t" style="left:109.0px;top:449.7px;font-size:12px;line-height:15.6px;height:15.6px;letter-spacing:0.028px;color:#c2c2c2;">Icons for Visual Studio Code</span>
<span class="t" style="left:109.0px;top:465.8px;font-size:10.6px;line-height:13.8px;height:13.8px;letter-spacing:0.232px;color:#b4b4b4;font-weight:bold;">VSCode Icons Team</span>
<div class="abs" style="left:274.2px;top:466.7px;width:36.800px;height:13px;background:#3a8340"></div>
<span class="t" style="left:279.7px;top:467.3px;font-size:10.2px;line-height:13.3px;height:13.3px;letter-spacing:-0.018px;color:#ffffff;">Install</span>
<svg style="left:57.4px;top:495.8px" width="38.600" height="33.000" viewBox="0 0 261.76 226.69"><path d="M161.096 0 L130.872 52.352 L100.647 0 H0 L130.872 226.688 L261.744 0 Z" fill="#4dba87"/><path d="M161.096 0 L130.872 52.352 L100.647 0 H52.346 L130.872 136.010 L209.398 0 Z" fill="#35495e"/></svg>
<span class="t" style="left:109.0px;top:489.0px;font-size:12px;line-height:15.6px;height:15.6px;letter-spacing:0.197px;color:#e4e4e4;font-weight:bold;">Vetur</span>
<span class="t" style="left:146.6px;top:490.4px;font-size:9.5px;line-height:12.3px;height:12.3px;letter-spacing:-0.420px;color:#8e8e8e;">0.21.1</span>
<svg style="left:251.2px;top:491.9px" width="10.500" height="9" viewBox="0 0 21 18" fill="none" stroke="#c8c8c8" stroke-width="1.900" stroke-linecap="round" stroke-linejoin="round"><path d="M6.500 13 H5 Q1.200 12.600 1.200 9 Q1.400 5.600 5 5.300 Q6.300 1.200 10.500 1.200 Q14.800 1.300 16 5.500 Q19.800 5.800 19.800 9.300 Q19.600 12.700 16 13 H14.500"/><path d="M10.500 8 V16 M7.500 13.300 L10.500 16.500 L13.500 13.300"/></svg>
<span class="t" style="left:262.6px;top:489.7px;font-size:10.3px;line-height:13.4px;height:13.4px;letter-spacing:-0.877px;color:#c4c4c4;">17M</span>
<svg style="left:286.0px;top:490.6px" width="9.600" height="9.200" viewBox="0 0 24 23"><path d="M12 0.500 L15.300 8 L23.500 8.800 L17.300 14.300 L19.100 22.400 L12 18.200 L4.900 22.400 L6.700 14.300 L0.500 8.800 L8.700 8 Z" fill="#e8843c"/></svg>
<span class="t" style="left:297.2px;top:489.7px;font-size:10.3px;line-height:13.4px;height:13.4px;letter-spacing:-0.276px;color:#c4c4c4;">4.5</span>
<span class="t" style="left:109.0px;top:506.9px;font-size:12px;line-height:15.6px;height:15.6px;letter-spacing:0.008px;color:#c2c2c2;">Vue tooling for VS Code</span>
<span class="t" style="left:109.0px;top:523.0px;font-size:10.6px;line-height:13.8px;height:13.8px;letter-spacing:0.127px;color:#b4b4b4;font-weight:bold;">Pine Wu</span>
<div class="abs" style="left:274.2px;top:524.0px;width:36.800px;height:13px;background:#3a8340"></div>
<span class="t" style="left:279.7px;top:524.5px;font-size:10.2px;line-height:13.3px;height:13.3px;letter-spacing:-0.018px;color:#ffffff;">Install</span>
<div id="tabs" class="abs"></div>
<div class="tab" style="left:321.800px;width:120.200px;background:#1e1e1e"></div>
<div class="tab" style="left:442px;width:111px"></div>
<div class="tab" style="left:553px;width:111px"></div>
<span class="t" style="left:334.3px;top:24.8px;font-size:9.2px;line-height:12.0px;height:12.0px;letter-spacing:-0.825px;color:#cbcb41;font-weight:bold;">JS</span>
<span class="t" style="left:350.5px;top:23.6px;font-size:12.4px;line-height:16.1px;height:16.1px;letter-spacing:0.094px;color:#f0f0f0;">blog-post.js</span>
<svg style="left:424.500px;top:27.100px" width="8.500" height="8.500" viewBox="0 0 8.500 8.500" stroke="#d0d0d0" stroke-width="1.100" fill="none"><path d="M0.500 0.500 L8 8 M8 0.500 L0.500 8"/></svg>
<span class="t" style="left:455.5px;top:24.8px;font-size:9.2px;line-height:12.0px;height:12.0px;letter-spacing:-0.825px;color:#cbcb41;font-weight:bold;">JS</span>
<span class="t" style="left:471.7px;top:23.5px;font-size:12.4px;line-height:16.1px;height:16.1px;letter-spacing:-0.152px;color:#8d8d8d;">index.js</span>
<span class="t" style="left:566.1px;top:24.8px;font-size:9.2px;line-height:12.0px;height:12.0px;letter-spacing:-0.825px;color:#cbcb41;font-weight:bold;">JS</span>
<span class="t" style="left:583.0px;top:23.5px;font-size:12.4px;line-height:16.1px;height:16.1px;letter-spacing:-0.055px;color:#8d8d8d;">utils.js</span>
<svg style="left:814.200px;top:23.700px" width="12" height="12.800" viewBox="0 0 14 15" fill="none" stroke="#c5c5c5" stroke-width="1.100"><circle cx="2.600" cy="2.600" r="1.700"/><circle cx="11" cy="12.400" r="1.700"/><path d="M2.600 4.300 V10.500 Q2.600 12.400 4.600 12.400 H6 M4.700 10.800 L6.300 12.400 L4.700 14 M11 10.700 V4.500 Q11 2.600 9 2.600 H7.600 M8.900 1 L7.300 2.600 L8.900 4.200"/></svg>
<svg style="left:843.500px;top:23.700px" width="13" height="12.200" viewBox="0 0 13 12.200" fill="none" stroke="#c5c5c5" stroke-width="1.100"><rect x="0.600" y="0.600" width="11.800" height="11" rx="0.800"/><path d="M6.500 0.600 V11.600"/></svg>
<svg style="left:872.500px;top:28.300px" width="14" height="4" viewBox="0 0 14 4" fill="#c5c5c5"><circle cx="1.600" cy="2" r="1.050"/><circle cx="6.600" cy="2" r="1.050"/><circle cx="11.600" cy="2" r="1.050"/></svg>
<div id="bc" class="abs"></div>
<span class="t" style="left:335.5px;top:50.0px;font-size:12.2px;line-height:15.9px;height:15.9px;letter-spacing:0.083px;color:#a4a4a4;z-index:6;">src</span>
<svg style="left:357px;top:52.800px;z-index:6" width="5" height="10" viewBox="0 0 5 10" fill="none" stroke="#8a8a8a" stroke-width="1"><path d="M0.600 0.600 L4.400 5 L0.600 9.400"/></svg>
<span class="t" style="left:367.5px;top:50.0px;font-size:12.2px;line-height:15.9px;height:15.9px;letter-spacing:-0.021px;color:#a4a4a4;z-index:6;">components</span>
<svg style="left:439.5px;top:52.800px;z-index:6" width="5" height="10" viewBox="0 0 5 10" fill="none" stroke="#8a8a8a" stroke-width="1"><path d="M0.600 0.600 L4.400 5 L0.600 9.400"/></svg>
<span class="t" style="left:453.3px;top:52.1px;font-size:9.2px;line-height:12.0px;height:12.0px;letter-spacing:-0.825px;color:#cbcb41;font-weight:bold;z-index:6;">JS</span>
<span class="t" style="left:469.5px;top:50.0px;font-size:12.2px;line-height:15.9px;height:15.9px;letter-spacing:0.156px;color:#a4a4a4;z-index:6;">blog-post.js</span>
<svg style="left:539.5px;top:52.800px;z-index:6" width="5" height="10" viewBox="0 0 5 10" fill="none" stroke="#8a8a8a" stroke-width="1"><path d="M0.600 0.600 L4.400 5 L0.600 9.400"/></svg>
<svg style="left:549.6px;top:50.5px;z-index:6" width="13" height="13" viewBox="0 0 14 14" fill="none" stroke="#b180d7" stroke-width="1.150" stroke-linejoin="round"><path d="M7 0.800 L12.800 3.700 V10.300 L7 13.200 L1.200 10.300 V3.700 Z M1.200 3.700 L7 6.600 L12.800 3.700 M7 6.600 V13.200"/></svg>
<span class="t" style="left:564.0px;top:50.0px;font-size:12.2px;line-height:15.9px;height:15.9px;letter-spacing:0.158px;color:#a4a4a4;z-index:6;">&lt;function&gt;</span>
<svg style="left:629.5px;top:52.800px;z-index:6" width="5" height="10" viewBox="0 0 5 10" fill="none" stroke="#8a8a8a" stroke-width="1"><path d="M0.600 0.600 L4.400 5 L0.600 9.400"/></svg>
<svg style="left:637.8px;top:53.0px;z-index:6" width="13.5" height="8.8" viewBox="0 0 14 10" fill="none" stroke="#86c0f4" stroke-width="1.250"><path d="M3 0.700 H0.700 V9.300 H3 M11 0.700 H13.300 V9.300 H11"/><path d="M7 1.700 L10.300 3.300 V6.700 L7 8.300 L3.700 6.700 V3.300 Z M3.700 3.300 L7 5 L10.300 3.300 M7 5 V8.300" stroke-width="1.150" stroke-linejoin="round"/></svg>
<span class="t" style="left:653.0px;top:50.0px;font-size:12.2px;line-height:15.9px;height:15.9px;letter-spacing:-0.055px;color:#a4a4a4;z-index:6;">blogPost</span>
<div id="code" class="abs"></div>
<div class="abs" style="left:382px;top:142.53px;width:457px;height:16.65px;border:1px solid #2b2b2b"></div>
<div class="abs" style="left:382.4px;top:143.62px;width:1px;height:216.45px;background:#707070"></div>
<div class="abs" style="left:395.7px;top:176.92px;width:1px;height:166.50px;background:#404040"></div>
<div class="abs" style="left:409.1px;top:193.57px;width:1px;height:133.20px;background:#404040"></div>
<div class="abs" style="left:422.4px;top:210.22px;width:1px;height:66.60px;background:#404040"></div>
<div class="abs" style="left:435.7px;top:243.53px;width:1px;height:16.65px;background:#404040"></div>
<span class="t" style="font-family:'DejaVu Sans Mono','Liberation Mono',monospace;left:320px;width:38.200px;text-align:right;top:60.37px;height:16.65px;line-height:16.65px;font-size:11px;color:#858585">1</span>
<span class="t" style="font-family:'DejaVu Sans Mono','Liberation Mono',monospace;left:382.00px;top:60.37px;height:16.65px;line-height:16.65px;font-size:11px;letter-spacing:0.046px;color:#c8c8c8;">import</span>
<span class="t" style="font-family:'DejaVu Sans Mono','Liberation Mono',monospace;left:428.68px;top:60.37px;height:16.65px;line-height:16.65px;font-size:11px;letter-spacing:0.046px;color:#d4d4d4;">{</span>
<span class="t" style="font-family:'DejaVu Sans Mono','Liberation Mono',monospace;left:442.01px;top:60.37px;height:16.65px;line-height:16.65px;font-size:11px;letter-spacing:0.046px;color:#9dd3f3;">graphql</span>
<span class="t" style="font-family:'DejaVu Sans Mono','Liberation Mono',monospace;left:495.36px;top:60.37px;height:16.65px;line-height:16.65px;font-size:11px;letter-spacing:0.046px;color:#d4d4d4;">}</span>
<span class="t" style="font-family:'DejaVu Sans Mono','Liberation Mono',monospace;left:508.69px;top:60.37px;height:16.65px;line-height:16.65px;font-size:11px;letter-spacing:0.046px;color:#c8c8c8;">from</span>
<span class="t" style="font-family:'DejaVu Sans Mono','Liberation Mono',monospace;left:542.03px;top:60.37px;height:16.65px;line-height:16.65px;font-size:11px;letter-spacing:0.046px;color:#ce9178;">&quot;gatsby&quot;</span>
<span class="t" style="font-family:'DejaVu Sans Mono','Liberation Mono',monospace;left:320px;width:38.200px;text-align:right;top:77.02px;height:16.65px;line-height:16.65px;font-size:11px;color:#858585">2</span>
<span class="t" style="font-family:'DejaVu Sans Mono','Liberation Mono',monospace;left:382.00px;top:77.02px;height:16.65px;line-height:16.65px;font-size:11px;letter-spacing:0.046px;color:#c8c8c8;">import</span>
<span class="t" style="font-family:'DejaVu Sans Mono','Liberation Mono',monospace;left:428.68px;top:77.02px;height:16.65px;line-height:16.65px;font-size:11px;letter-spacing:0.046px;color:#9dd3f3;">React</span>
<span class="t" style="font-family:'DejaVu Sans Mono','Liberation Mono',monospace;left:468.68px;top:77.02px;height:16.65px;line-height:16.65px;font-size:11px;letter-spacing:0.046px;color:#c8c8c8;">from</span>
<span class="t" style="font-family:'DejaVu Sans Mono','Liberation Mono',monospace;left:502.02px;top:77.02px;height:16.65px;line-height:16.65px;font-size:11px;letter-spacing:0.046px;color:#ce9178;">&quot;react&quot;</span>
<span class="t" style="font-family:'DejaVu Sans Mono','Liberation Mono',monospace;left:320px;width:38.200px;text-align:right;top:93.67px;height:16.65px;line-height:16.65px;font-size:11px;color:#858585">3</span>
<span class="t" style="font-family:'DejaVu Sans Mono','Liberation Mono',monospace;left:382.00px;top:93.67px;height:16.65px;line-height:16.65px;font-size:11px;letter-spacing:0.046px;color:#c8c8c8;">import</span>
<span class="t" style="font-family:'DejaVu Sans Mono','Liberation Mono',monospace;left:428.68px;top:93.67px;height:16.65px;line-height:16.65px;font-size:11px;letter-spacing:0.046px;color:#9dd3f3;">Image</span>
<span class="t" style="font-family:'DejaVu Sans Mono','Liberation Mono',monospace;left:468.68px;top:93.67px;height:16.65px;line-height:16.65px;font-size:11px;letter-spacing:0.046px;color:#c8c8c8;">from</span>
<span class="t" style="font-family:'DejaVu Sans Mono','Liberation Mono',monospace;left:502.02px;top:93.67px;height:16.65px;line-height:16.65px;font-size:11px;letter-spacing:0.046px;color:#9dd3f3;text-decoration:underline;">&quot;gatsby-image&quot;</span>
<span class="t" style="font-family:'DejaVu Sans Mono','Liberation Mono',monospace;left:320px;width:38.200px;text-align:right;top:110.32px;height:16.65px;line-height:16.65px;font-size:11px;color:#858585">4</span>
<span class="t" style="font-family:'DejaVu Sans Mono','Liberation Mono',monospace;left:320px;width:38.200px;text-align:right;top:126.97px;height:16.65px;line-height:16.65px;font-size:11px;color:#858585">5</span>
<span class="t" style="font-family:'DejaVu Sans Mono','Liberation Mono',monospace;left:382.00px;top:126.97px;height:16.65px;line-height:16.65px;font-size:11px;letter-spacing:0.046px;color:#c8c8c8;">export</span>
<span class="t" style="font-family:'DejaVu Sans Mono','Liberation Mono',monospace;left:428.68px;top:126.97px;height:16.65px;line-height:16.65px;font-size:11px;letter-spacing:0.046px;color:#c8c8c8;">default</span>
<span class="t" style="font-family:'DejaVu Sans Mono','Liberation Mono',monospace;left:482.02px;top:126.97px;height:16.65px;line-height:16.65px;font-size:11px;letter-spacing:0.046px;color:#d4d4d4;">({</span>
<span class="t" style="font-family:'DejaVu Sans Mono','Liberation Mono',monospace;left:502.02px;top:126.97px;height:16.65px;line-height:16.65px;font-size:11px;letter-spacing:0.046px;color:#9dd3f3;">data</span>
<span class="t" style="font-family:'DejaVu Sans Mono','Liberation Mono',monospace;left:535.36px;top:126.97px;height:16.65px;line-height:16.65px;font-size:11px;letter-spacing:0.046px;color:#d4d4d4;">})</span>
<span class="t" style="font-family:'DejaVu Sans Mono','Liberation Mono',monospace;left:555.37px;top:126.97px;height:16.65px;line-height:16.65px;font-size:11px;letter-spacing:0.046px;color:#5193c8;">=&gt;</span>
<span class="t" style="font-family:'DejaVu Sans Mono','Liberation Mono',monospace;left:575.37px;top:126.97px;height:16.65px;line-height:16.65px;font-size:11px;letter-spacing:0.046px;color:#d4d4d4;">{</span>
<span class="t" style="font-family:'DejaVu Sans Mono','Liberation Mono',monospace;left:320px;width:38.200px;text-align:right;top:143.62px;height:16.65px;line-height:16.65px;font-size:11px;color:#c6c6c6">6</span>
<span class="t" style="font-family:'DejaVu Sans Mono','Liberation Mono',monospace;left:395.34px;top:143.62px;height:16.65px;line-height:16.65px;font-size:11px;letter-spacing:0.046px;color:#5193c8;">const</span>
<span class="t" style="font-family:'DejaVu Sans Mono','Liberation Mono',monospace;left:435.34px;top:143.62px;height:16.65px;line-height:16.65px;font-size:11px;letter-spacing:0.046px;color:#9dd3f3;">blogPost</span>
<span class="t" style="font-family:'DejaVu Sans Mono','Liberation Mono',monospace;left:495.36px;top:143.62px;height:16.65px;line-height:16.65px;font-size:11px;letter-spacing:0.046px;color:#d4d4d4;">=</span>
<span class="t" style="font-family:'DejaVu Sans Mono','Liberation Mono',monospace;left:508.69px;top:143.62px;height:16.65px;line-height:16.65px;font-size:11px;letter-spacing:0.046px;color:#d4d4d4;">data.cms.blogPost</span>
<span class="t" style="font-family:'DejaVu Sans Mono','Liberation Mono',monospace;left:320px;width:38.200px;text-align:right;top:160.28px;height:16.65px;line-height:16.65px;font-size:11px;color:#858585">7</span>
<span class="t" style="font-family:'DejaVu Sans Mono','Liberation Mono',monospace;left:395.34px;top:160.28px;height:16.65px;line-height:16.65px;font-size:11px;letter-spacing:0.046px;color:#c8c8c8;">return</span>
<span class="t" style="font-family:'DejaVu Sans Mono','Liberation Mono',monospace;left:442.01px;top:160.28px;height:16.65px;line-height:16.65px;font-size:11px;letter-spacing:0.046px;color:#d4d4d4;">(</span>
<span class="t" style="font-family:'DejaVu Sans Mono','Liberation Mono',monospace;left:320px;width:38.200px;text-align:right;top:176.92px;height:16.65px;line-height:16.65px;font-size:11px;color:#858585">8</span>
<span class="t" style="font-family:'DejaVu Sans Mono','Liberation Mono',monospace;left:408.67px;top:176.92px;height:16.65px;line-height:16.65px;font-size:11px;letter-spacing:0.046px;color:#808080;">&lt;</span>
<span class="t" style="font-family:'DejaVu Sans Mono','Liberation Mono',monospace;left:415.34px;top:176.92px;height:16.65px;line-height:16.65px;font-size:11px;letter-spacing:0.046px;color:#5193c8;">div</span>
<span class="t" style="font-family:'DejaVu Sans Mono','Liberation Mono',monospace;left:435.34px;top:176.92px;height:16.65px;line-height:16.65px;font-size:11px;letter-spacing:0.046px;color:#808080;">&gt;</span>
<span class="t" style="font-family:'DejaVu Sans Mono','Liberation Mono',monospace;left:320px;width:38.200px;text-align:right;top:193.57px;height:16.65px;line-height:16.65px;font-size:11px;color:#858585">9</span>
<span class="t" style="font-family:'DejaVu Sans Mono','Liberation Mono',monospace;left:422.01px;top:193.57px;height:16.65px;line-height:16.65px;font-size:11px;letter-spacing:0.046px;color:#5193c8;">{</span>
<span class="t" style="font-family:'DejaVu Sans Mono','Liberation Mono',monospace;left:428.68px;top:193.57px;height:16.65px;line-height:16.65px;font-size:11px;letter-spacing:0.046px;color:#9dd3f3;">blogPost</span>
<span class="t" style="font-family:'DejaVu Sans Mono','Liberation Mono',monospace;left:320px;width:38.200px;text-align:right;top:210.22px;height:16.65px;line-height:16.65px;font-size:11px;color:#858585">10</span>
<span class="t" style="font-family:'DejaVu Sans Mono','Liberation Mono',monospace;left:435.34px;top:210.22px;height:16.65px;line-height:16.65px;font-size:11px;letter-spacing:0.046px;color:#9dd3f3;">blogPos</span>
<span class="t" style="font-family:'DejaVu Sans Mono','Liberation Mono',monospace;left:320px;width:38.200px;text-align:right;top:226.88px;height:16.65px;line-height:16.65px;font-size:11px;color:#858585">11</span>
<span class="t" style="font-family:'DejaVu Sans Mono','Liberation Mono',monospace;left:435.34px;top:226.88px;height:16.65px;line-height:16.65px;font-size:11px;letter-spacing:0.046px;color:#9dd3f3;">blogPos</span>
<span class="t" style="font-family:'DejaVu Sans Mono','Liberation Mono',monospace;left:320px;width:38.200px;text-align:right;top:243.53px;height:16.65px;line-height:16.65px;font-size:11px;color:#858585">12</span>
<span class="t" style="font-family:'DejaVu Sans Mono','Liberation Mono',monospace;left:448.68px;top:243.53px;height:16.65px;line-height:16.65px;font-size:11px;letter-spacing:0.046px;color:#808080;">&lt;</span>
<span class="t" style="font-family:'DejaVu Sans Mono','Liberation Mono',monospace;left:455.35px;top:243.53px;height:16.65px;line-height:16.65px;font-size:11px;letter-spacing:0.046px;color:#56bda2;">Imag</span>
<span class="t" style="font-family:'DejaVu Sans Mono','Liberation Mono',monospace;left:320px;width:38.200px;text-align:right;top:260.18px;height:16.65px;line-height:16.65px;font-size:11px;color:#858585">13</span>
<span class="t" style="font-family:'DejaVu Sans Mono','Liberation Mono',monospace;left:435.34px;top:260.18px;height:16.65px;line-height:16.65px;font-size:11px;letter-spacing:0.046px;color:#d4d4d4;">)</span>
<span class="t" style="font-family:'DejaVu Sans Mono','Liberation Mono',monospace;left:442.01px;top:260.18px;height:16.65px;line-height:16.65px;font-size:11px;letter-spacing:0.046px;color:#5193c8;">}</span>
<span class="t" style="font-family:'DejaVu Sans Mono','Liberation Mono',monospace;left:320px;width:38.200px;text-align:right;top:276.82px;height:16.65px;line-height:16.65px;font-size:11px;color:#858585">14</span>
<span class="t" style="font-family:'DejaVu Sans Mono','Liberation Mono',monospace;left:422.01px;top:276.82px;height:16.65px;line-height:16.65px;font-size:11px;letter-spacing:0.046px;color:#808080;">&lt;</span>
<span class="t" style="font-family:'DejaVu Sans Mono','Liberation Mono',monospace;left:428.68px;top:276.82px;height:16.65px;line-height:16.65px;font-size:11px;letter-spacing:0.046px;color:#5193c8;">h1</span>
<span class="t" style="font-family:'DejaVu Sans Mono','Liberation Mono',monospace;left:442.01px;top:276.82px;height:16.65px;line-height:16.65px;font-size:11px;letter-spacing:0.046px;color:#808080;">&gt;</span>
<span class="t" style="font-family:'DejaVu Sans Mono','Liberation Mono',monospace;left:448.68px;top:276.82px;height:16.65px;line-height:16.65px;font-size:11px;letter-spacing:0.046px;color:#5193c8;">{</span>
<span class="t" style="font-family:'DejaVu Sans Mono','Liberation Mono',monospace;left:455.35px;top:276.82px;height:16.65px;line-height:16.65px;font-size:11px;letter-spacing:0.046px;color:#9dd3f3;">blog</span>
<span class="t" style="font-family:'DejaVu Sans Mono','Liberation Mono',monospace;left:320px;width:38.200px;text-align:right;top:293.48px;height:16.65px;line-height:16.65px;font-size:11px;color:#858585">15</span>
<span class="t" style="font-family:'DejaVu Sans Mono','Liberation Mono',monospace;left:422.01px;top:293.48px;height:16.65px;line-height:16.65px;font-size:11px;letter-spacing:0.046px;color:#808080;">&lt;</span>
<span class="t" style="font-family:'DejaVu Sans Mono','Liberation Mono',monospace;left:428.68px;top:293.48px;height:16.65px;line-height:16.65px;font-size:11px;letter-spacing:0.046px;color:#5193c8;">div</span>
<span class="t" style="font-family:'DejaVu Sans Mono','Liberation Mono',monospace;left:448.68px;top:293.48px;height:16.65px;line-height:16.65px;font-size:11px;letter-spacing:0.046px;color:#808080;">&gt;</span>
<span class="t" style="font-family:'DejaVu Sans Mono','Liberation Mono',monospace;left:455.35px;top:293.48px;height:16.65px;line-height:16.65px;font-size:11px;letter-spacing:0.046px;color:#d4d4d4;">Post</span>
<span class="t" style="font-family:'DejaVu Sans Mono','Liberation Mono',monospace;left:320px;width:38.200px;text-align:right;top:310.12px;height:16.65px;line-height:16.65px;font-size:11px;color:#858585">16</span>
<span class="t" style="font-family:'DejaVu Sans Mono','Liberation Mono',monospace;left:422.01px;top:310.12px;height:16.65px;line-height:16.65px;font-size:11px;letter-spacing:0.046px;color:#808080;">&lt;</span>
<span class="t" style="font-family:'DejaVu Sans Mono','Liberation Mono',monospace;left:428.68px;top:310.12px;height:16.65px;line-height:16.65px;font-size:11px;letter-spacing:0.046px;color:#5193c8;">div</span>
<span class="t" style="font-family:'DejaVu Sans Mono','Liberation Mono',monospace;left:455.35px;top:310.12px;height:16.65px;line-height:16.65px;font-size:11px;letter-spacing:0.046px;color:#9dd3f3;">dang</span>
<span class="t" style="font-family:'DejaVu Sans Mono','Liberation Mono',monospace;left:320px;width:38.200px;text-align:right;top:326.78px;height:16.65px;line-height:16.65px;font-size:11px;color:#858585">17</span>
<span class="t" style="font-family:'DejaVu Sans Mono','Liberation Mono',monospace;left:408.67px;top:326.78px;height:16.65px;line-height:16.65px;font-size:11px;letter-spacing:0.046px;color:#808080;">&lt;/</span>
<span class="t" style="font-family:'DejaVu Sans Mono','Liberation Mono',monospace;left:422.01px;top:326.78px;height:16.65px;line-height:16.65px;font-size:11px;letter-spacing:0.046px;color:#5193c8;">div</span>
<span class="t" style="font-family:'DejaVu Sans Mono','Liberation Mono',monospace;left:442.01px;top:326.78px;height:16.65px;line-height:16.65px;font-size:11px;letter-spacing:0.046px;color:#808080;">&gt;</span>
<span class="t" style="font-family:'DejaVu Sans Mono','Liberation Mono',monospace;left:320px;width:38.200px;text-align:right;top:343.43px;height:16.65px;line-height:16.65px;font-size:11px;color:#858585">18</span>
<span class="t" style="font-family:'DejaVu Sans Mono','Liberation Mono',monospace;left:395.34px;top:343.43px;height:16.65px;line-height:16.65px;font-size:11px;letter-spacing:0.046px;color:#d4d4d4;">)</span>
<span class="t" style="font-family:'DejaVu Sans Mono','Liberation Mono',monospace;left:320px;width:38.200px;text-align:right;top:360.07px;height:16.65px;line-height:16.65px;font-size:11px;color:#858585">19</span>
<span class="t" style="font-family:'DejaVu Sans Mono','Liberation Mono',monospace;left:382.00px;top:360.07px;height:16.65px;line-height:16.65px;font-size:11px;letter-spacing:0.046px;color:#d4d4d4;">}</span>
<span class="t" style="font-family:'DejaVu Sans Mono','Liberation Mono',monospace;left:320px;width:38.200px;text-align:right;top:376.73px;height:16.65px;line-height:16.65px;font-size:11px;color:#858585">20</span>
<span class="t" style="font-family:'DejaVu Sans Mono','Liberation Mono',monospace;left:320px;width:38.200px;text-align:right;top:393.38px;height:16.65px;line-height:16.65px;font-size:11px;color:#858585">21</span>
<span class="t" style="font-family:'DejaVu Sans Mono','Liberation Mono',monospace;left:382.00px;top:393.38px;height:16.65px;line-height:16.65px;font-size:11px;letter-spacing:0.046px;color:#c8c8c8;">export</span>
<span class="t" style="font-family:'DejaVu Sans Mono','Liberation Mono',monospace;left:428.68px;top:393.38px;height:16.65px;line-height:16.65px;font-size:11px;letter-spacing:0.046px;color:#5193c8;">const</span>
<span class="t" style="font-family:'DejaVu Sans Mono','Liberation Mono',monospace;left:468.68px;top:393.38px;height:16.65px;line-height:16.65px;font-size:11px;letter-spacing:0.046px;color:#9dd3f3;">query</span>
<span class="t" style="font-family:'DejaVu Sans Mono','Liberation Mono',monospace;left:508.69px;top:393.38px;height:16.65px;line-height:16.65px;font-size:11px;letter-spacing:0.046px;color:#d4d4d4;">=</span>
<span class="t" style="font-family:'DejaVu Sans Mono','Liberation Mono',monospace;left:522.03px;top:393.38px;height:16.65px;line-height:16.65px;font-size:11px;letter-spacing:0.046px;color:#d4d4d4;">graphql</span>
<span class="t" style="font-family:'DejaVu Sans Mono','Liberation Mono',monospace;left:568.70px;top:393.38px;height:16.65px;line-height:16.65px;font-size:11px;letter-spacing:0.046px;color:#ce9178;">`</span>
<div class="abs" style="left:516.0px;top:144.62px;width:1.400px;height:14.65px;background:#d0d0d0"></div>
<div class="abs" style="left:838.500px;top:66px;width:1px;height:344px;background:#121212"></div>
<div class="abs" style="left:883px;top:66px;width:13px;height:344px;background:#1e1e1e;border-left:1px solid #2a2a2a"></div>
<div class="abs" style="left:883.500px;top:94px;width:12.500px;height:1.500px;background:#5a5a5a"></div>
<div class="abs" style="left:843.500px;top:77.500px;width:39.500px;height:10.500px;background:rgba(38,79,120,0.450)"></div>
<svg style="left:841px;top:67.500px" width="42" height="56" viewBox="0 0 42 56"><rect x="0.0" y="0.00" width="13.2" height="0.900" fill="#8a8a8a" opacity="0.550"/><rect x="0.0" y="1.55" width="11.0" height="0.900" fill="#8a9aa8" opacity="0.550"/><rect x="0.0" y="3.10" width="15.4" height="0.900" fill="#7f9bb5" opacity="0.550"/><rect x="0.0" y="6.20" width="13.2" height="0.900" fill="#8a8a8a" opacity="0.550"/><rect x="1.1" y="7.75" width="16.5" height="0.900" fill="#6f8fa8" opacity="0.550"/><rect x="1.1" y="9.30" width="6.6" height="0.900" fill="#888" opacity="0.550"/><rect x="2.2" y="10.85" width="4.4" height="0.900" fill="#67819a" opacity="0.550"/><rect x="3.3" y="12.40" width="28.6" height="0.900" fill="#7a9cc0" opacity="0.550"/><rect x="4.4" y="13.95" width="33.0" height="0.900" fill="#7a9cc0" opacity="0.550"/><rect x="4.4" y="15.50" width="37.4" height="0.900" fill="#7a9cc0" opacity="0.550"/><rect x="5.5" y="17.05" width="41.8" height="0.900" fill="#5f9a8a" opacity="0.550"/><rect x="4.4" y="18.60" width="3.3" height="0.900" fill="#888" opacity="0.550"/><rect x="3.3" y="20.15" width="26.4" height="0.900" fill="#7a9cc0" opacity="0.550"/><rect x="3.3" y="21.70" width="24.2" height="0.900" fill="#999" opacity="0.550"/><rect x="3.3" y="23.25" width="33.0" height="0.900" fill="#7a9cc0" opacity="0.550"/><rect x="2.2" y="24.80" width="5.5" height="0.900" fill="#67819a" opacity="0.550"/><rect x="1.1" y="26.35" width="1.1" height="0.900" fill="#888" opacity="0.550"/><rect x="0.0" y="27.90" width="1.1" height="0.900" fill="#888" opacity="0.550"/><rect x="0.0" y="31.00" width="13.2" height="0.900" fill="#8a8a8a" opacity="0.550"/><rect x="1.1" y="32.55" width="6.6" height="0.900" fill="#888" opacity="0.550"/><rect x="2.2" y="34.10" width="9.9" height="0.900" fill="#999" opacity="0.550"/><rect x="3.3" y="35.65" width="7.7" height="0.900" fill="#888" opacity="0.550"/><rect x="4.4" y="37.20" width="8.8" height="0.900" fill="#888" opacity="0.550"/><rect x="4.4" y="38.75" width="5.5" height="0.900" fill="#888" opacity="0.550"/><rect x="5.5" y="40.30" width="9.9" height="0.900" fill="#888" opacity="0.550"/><rect x="5.5" y="41.85" width="13.2" height="0.900" fill="#888" opacity="0.550"/><rect x="6.6" y="43.40" width="15.4" height="0.900" fill="#888" opacity="0.550"/><rect x="4.4" y="44.95" width="2.2" height="0.900" fill="#777" opacity="0.550"/><rect x="3.3" y="46.50" width="2.2" height="0.900" fill="#777" opacity="0.550"/><rect x="2.2" y="48.05" width="2.2" height="0.900" fill="#777" opacity="0.550"/><rect x="1.1" y="49.60" width="2.2" height="0.900" fill="#777" opacity="0.550"/><rect x="0.0" y="51.15" width="2.2" height="0.900" fill="#777" opacity="0.550"/></svg>
<div class="abs" style="left:479.5px;top:159.38px;width:398.5px;height:200.80px;background:#252526;border:1px solid #3e3e3e;z-index:7"></div>
<div class="abs" style="left:480.5px;top:160.38px;width:396.5px;height:16.65px;background:#0b3558;z-index:7"></div>
<svg style="left:486.3px;top:164.38px;z-index:8" width="13.3" height="8.8" viewBox="0 0 14 10" fill="none" stroke="#86c0f4" stroke-width="1.250"><path d="M3 0.700 H0.700 V9.300 H3 M11 0.700 H13.300 V9.300 H11"/><path d="M7 1.700 L10.300 3.300 V6.700 L7 8.300 L3.700 6.700 V3.300 Z M3.700 3.300 L7 5 L10.300 3.300 M7 5 V8.300" stroke-width="1.150" stroke-linejoin="round"/></svg>
<span class="t" style="font-family:'DejaVu Sans Mono','Liberation Mono',monospace;left:503.200px;top:160.38px;height:16.65px;line-height:16.65px;font-size:11px;letter-spacing:0.046px;color:#d4d4d4;z-index:8"><span style="color:#3d92de">d</span>ata</span>
<svg style="left:486.3px;top:181.03px;z-index:8" width="13.3" height="8.8" viewBox="0 0 14 10" fill="none" stroke="#86c0f4" stroke-width="1.250"><path d="M3 0.700 H0.700 V9.300 H3 M11 0.700 H13.300 V9.300 H11"/><path d="M7 1.700 L10.300 3.300 V6.700 L7 8.300 L3.700 6.700 V3.300 Z M3.700 3.300 L7 5 L10.300 3.300 M7 5 V8.300" stroke-width="1.150" stroke-linejoin="round"/></svg>
<span class="t" style="font-family:'DejaVu Sans Mono','Liberation Mono',monospace;left:503.200px;top:177.03px;height:16.65px;line-height:16.65px;font-size:11px;letter-spacing:0.046px;color:#d4d4d4;z-index:8"><span style="color:#3d92de">d</span>ateFormat</span>
<svg style="left:486.3px;top:197.68px;z-index:8" width="13.3" height="8.8" viewBox="0 0 14 10" fill="none" stroke="#86c0f4" stroke-width="1.250"><path d="M3 0.700 H0.700 V9.300 H3 M11 0.700 H13.300 V9.300 H11"/><path d="M7 1.700 L10.300 3.300 V6.700 L7 8.300 L3.700 6.700 V3.300 Z M3.700 3.300 L7 5 L10.300 3.300 M7 5 V8.300" stroke-width="1.150" stroke-linejoin="round"/></svg>
<span class="t" style="font-family:'DejaVu Sans Mono','Liberation Mono',monospace;left:503.200px;top:193.68px;height:16.65px;line-height:16.65px;font-size:11px;letter-spacing:0.046px;color:#d4d4d4;z-index:8"><span style="color:#3d92de">d</span>ebug</span>
<svg style="left:486.3px;top:213.52px;z-index:8" width="13.500" height="10.500" viewBox="0 0 27 21" fill="none" stroke="#c5c5c5" stroke-width="2.100"><path d="M1 2.500 H9 V6.500 H1 Z M13 3.500 H26 M1 11.500 H17 M21 11.500 H26 M1 18.500 H11 M15 18.500 H26"/></svg>
<span class="t" style="font-family:'DejaVu Sans Mono','Liberation Mono',monospace;left:503.200px;top:210.32px;height:16.65px;line-height:16.65px;font-size:11px;letter-spacing:0.046px;color:#d4d4d4;z-index:8"><span style="color:#3d92de">d</span>ebugger</span>
<svg style="left:486.3px;top:228.78px;z-index:8" width="13.2" height="13.2" viewBox="0 0 14 14" fill="none" stroke="#b180d7" stroke-width="1.150" stroke-linejoin="round"><path d="M7 0.800 L12.800 3.700 V10.300 L7 13.200 L1.200 10.300 V3.700 Z M1.200 3.700 L7 6.600 L12.800 3.700 M7 6.600 V13.200"/></svg>
<span class="t" style="font-family:'DejaVu Sans Mono','Liberation Mono',monospace;left:503.200px;top:226.97px;height:16.65px;line-height:16.65px;font-size:11px;letter-spacing:0.046px;color:#d4d4d4;z-index:8"><span style="color:#3d92de">d</span>ecodeURI</span>
<svg style="left:486.3px;top:245.43px;z-index:8" width="13.2" height="13.2" viewBox="0 0 14 14" fill="none" stroke="#b180d7" stroke-width="1.150" stroke-linejoin="round"><path d="M7 0.800 L12.800 3.700 V10.300 L7 13.200 L1.200 10.300 V3.700 Z M1.200 3.700 L7 6.600 L12.800 3.700 M7 6.600 V13.200"/></svg>
<span class="t" style="font-family:'DejaVu Sans Mono','Liberation Mono',monospace;left:503.200px;top:243.62px;height:16.65px;line-height:16.65px;font-size:11px;letter-spacing:0.046px;color:#d4d4d4;z-index:8"><span style="color:#3d92de">d</span>ecodeURIComponent</span>
<svg style="left:486.3px;top:263.47px;z-index:8" width="13.500" height="10.500" viewBox="0 0 27 21" fill="none" stroke="#c5c5c5" stroke-width="2.100"><path d="M1 2.500 H9 V6.500 H1 Z M13 3.500 H26 M1 11.500 H17 M21 11.500 H26 M1 18.500 H11 M15 18.500 H26"/></svg>
<span class="t" style="font-family:'DejaVu Sans Mono','Liberation Mono',monospace;left:503.200px;top:260.27px;height:16.65px;line-height:16.65px;font-size:11px;letter-spacing:0.046px;color:#d4d4d4;z-index:8"><span style="color:#3d92de">d</span>efault</span>
<svg style="left:486.3px;top:280.92px;z-index:8" width="13.3" height="8.8" viewBox="0 0 14 10" fill="none" stroke="#86c0f4" stroke-width="1.250"><path d="M3 0.700 H0.700 V9.300 H3 M11 0.700 H13.300 V9.300 H11"/><path d="M7 1.700 L10.300 3.300 V6.700 L7 8.300 L3.700 6.700 V3.300 Z M3.700 3.300 L7 5 L10.300 3.300 M7 5 V8.300" stroke-width="1.150" stroke-linejoin="round"/></svg>
<span class="t" style="font-family:'DejaVu Sans Mono','Liberation Mono',monospace;left:503.200px;top:276.92px;height:16.65px;line-height:16.65px;font-size:11px;letter-spacing:0.046px;color:#d4d4d4;z-index:8"><span style="color:#3d92de">d</span>efaultStatus</span>
<svg style="left:486.3px;top:296.77px;z-index:8" width="13.500" height="10.500" viewBox="0 0 27 21" fill="none" stroke="#c5c5c5" stroke-width="2.100"><path d="M1 2.500 H9 V6.500 H1 Z M13 3.500 H26 M1 11.500 H17 M21 11.500 H26 M1 18.500 H11 M15 18.500 H26"/></svg>
<span class="t" style="font-family:'DejaVu Sans Mono','Liberation Mono',monospace;left:503.200px;top:293.57px;height:16.65px;line-height:16.65px;font-size:11px;letter-spacing:0.046px;color:#d4d4d4;z-index:8"><span style="color:#3d92de">d</span>elete</span>
<svg style="left:486.3px;top:312.03px;z-index:8" width="13.2" height="13.2" viewBox="0 0 14 14" fill="none" stroke="#b180d7" stroke-width="1.150" stroke-linejoin="round"><path d="M7 0.800 L12.800 3.700 V10.300 L7 13.200 L1.200 10.300 V3.700 Z M1.200 3.700 L7 6.600 L12.800 3.700 M7 6.600 V13.200"/></svg>
<span class="t" style="font-family:'DejaVu Sans Mono','Liberation Mono',monospace;left:503.200px;top:310.23px;height:16.65px;line-height:16.65px;font-size:11px;letter-spacing:0.046px;color:#d4d4d4;z-index:8"><span style="color:#3d92de">d</span>epartFocus</span>
<svg style="left:486.3px;top:330.88px;z-index:8" width="13.3" height="8.8" viewBox="0 0 14 10" fill="none" stroke="#86c0f4" stroke-width="1.250"><path d="M3 0.700 H0.700 V9.300 H3 M11 0.700 H13.300 V9.300 H11"/><path d="M7 1.700 L10.300 3.300 V6.700 L7 8.300 L3.700 6.700 V3.300 Z M3.700 3.300 L7 5 L10.300 3.300 M7 5 V8.300" stroke-width="1.150" stroke-linejoin="round"/></svg>
<span class="t" style="font-family:'DejaVu Sans Mono','Liberation Mono',monospace;left:503.200px;top:326.88px;height:16.65px;line-height:16.65px;font-size:11px;letter-spacing:0.046px;color:#d4d4d4;z-index:8"><span style="color:#3d92de">d</span>evicePixelRatio</span>
<svg style="left:486.3px;top:345.32px;z-index:8" width="13.2" height="13.2" viewBox="0 0 14 14" fill="none" stroke="#b180d7" stroke-width="1.150" stroke-linejoin="round"><path d="M7 0.800 L12.800 3.700 V10.300 L7 13.200 L1.200 10.300 V3.700 Z M1.200 3.700 L7 6.600 L12.800 3.700 M7 6.600 V13.200"/></svg>
<span class="t" style="font-family:'DejaVu Sans Mono','Liberation Mono',monospace;left:503.200px;top:343.52px;height:16.65px;line-height:16.65px;font-size:11px;letter-spacing:0.046px;color:#d4d4d4;z-index:8"><span style="color:#3d92de">d</span>ispatchEvent</span>
<span class="t" style="font-family:'DejaVu Sans Mono','Liberation Mono',monospace;left:764.600px;top:160.38px;height:16.65px;line-height:16.65px;font-size:11px;letter-spacing:0.046px;color:#c0c0c0;z-index:8">var data: any</span>
<svg style="left:855px;top:164.07px;z-index:8" width="9.400" height="9.400" viewBox="0 0 9.400 9.400" fill="none" stroke="#6a9cc6" stroke-width="0.850"><circle cx="4.700" cy="4.700" r="4.100"/><path d="M4.700 4.200 V7 M4.700 2.400 V3.300"/></svg>
<div class="abs" style="left:321.800px;top:410.300px;width:574.200px;height:133px;background:#1e1e1e;border-top:1px solid #3a3a3a"></div>
<span class="t" style="left:339.5px;top:420.9px;font-size:10.4px;line-height:13.5px;height:13.5px;letter-spacing:-0.594px;color:#909090;">PROBLEMS</span>
<span class="t" style="left:412.0px;top:420.9px;font-size:10.4px;line-height:13.5px;height:13.5px;letter-spacing:-0.568px;color:#e7e7e7;">TERMINAL</span>
<div class="abs" style="left:412px;top:439.200px;width:48px;height:1px;background:#686868"></div>
<svg style="left:486px;top:425.500px" width="12" height="4" viewBox="0 0 12 4" fill="#c5c5c5"><circle cx="1.400" cy="2" r="0.950"/><circle cx="5.800" cy="2" r="0.950"/><circle cx="10.200" cy="2" r="0.950"/></svg>
<div class="abs" style="left:591px;top:419.800px;width:147.700px;height:15px;background:#3c3c3c;border-radius:2.500px"></div>
<span class="t" style="left:599.0px;top:420.7px;font-size:11px;line-height:14.3px;height:14.3px;letter-spacing:-0.216px;color:#eaeaea;">2: Task - develop</span>
<svg style="left:729.500px;top:422.500px" width="5" height="10" viewBox="0 0 5 10" fill="#e0e0e0"><path d="M2.500 0.500 L4.800 3.800 H0.200 Z M2.500 9.500 L4.800 6.200 H0.200 Z"/></svg>
<svg style="left:754.500px;top:421px" width="12" height="12" viewBox="0 0 12 12" stroke="#c5c5c5" stroke-width="1.100" fill="none"><path d="M6 0.300 V11.700 M0.300 6 H11.700"/></svg>
<svg style="left:784.500px;top:420.800px" width="13" height="12.500" viewBox="0 0 13 12.500" stroke="#c5c5c5" stroke-width="1.100" fill="none"><rect x="0.600" y="0.600" width="11.800" height="11.300" rx="0.800"/><path d="M6.500 0.600 V11.900"/></svg>
<svg style="left:814.500px;top:420.500px" width="11" height="13" viewBox="0 0 11 13" stroke="#c5c5c5" stroke-width="1" fill="none"><path d="M0.500 2.700 H10.500 M3.700 2.500 V1 H7.300 V2.500 M1.600 2.900 V11.400 Q1.600 12.400 2.600 12.400 H8.400 Q9.400 12.400 9.400 11.400 V2.900 M3.900 4.800 V10.300 M5.500 4.800 V10.300 M7.100 4.800 V10.300"/></svg>
<svg style="left:843.800px;top:423.300px" width="12" height="7" viewBox="0 0 13 7" stroke="#c5c5c5" stroke-width="1.150" fill="none"><path d="M0.500 6.500 L6.500 0.700 L12.500 6.500"/></svg>
<svg style="left:874.700px;top:422.800px" width="9" height="9" viewBox="0 0 9 9" stroke="#c5c5c5" stroke-width="1.150" fill="none"><path d="M0.500 0.500 L8.500 8.500 M8.500 0.500 L0.500 8.500"/></svg>
<span class="t" style="font-family:'DejaVu Sans Mono','Liberation Mono',monospace;left:340.00px;top:448.60px;height:13.2px;line-height:13.2px;font-size:10.63px;color:#3b82c4;">info</span><span class="t" style="font-family:'DejaVu Sans Mono','Liberation Mono',monospace;left:372.00px;top:448.60px;height:13.2px;line-height:13.2px;font-size:10.63px;color:#3b82c4;font-weight:bold;transform:scaleY(0.820);transform-origin:50% 78%">ℹ</span><span class="t" style="font-family:'DejaVu Sans Mono','Liberation Mono',monospace;left:384.80px;top:448.60px;height:13.2px;line-height:13.2px;font-size:10.63px;color:#6b6b6b;transform:scaleY(1.350);transform-origin:50% 40%">｢</span><span class="t" style="font-family:'DejaVu Sans Mono','Liberation Mono',monospace;left:391.20px;top:448.60px;height:13.2px;line-height:13.2px;font-size:10.63px;color:#6b6b6b;">wdm</span><span class="t" style="font-family:'DejaVu Sans Mono','Liberation Mono',monospace;left:410.40px;top:448.60px;height:13.2px;line-height:13.2px;font-size:10.63px;color:#6b6b6b;transform:scaleY(1.350);transform-origin:50% 78%">｣</span><span class="t" style="font-family:'DejaVu Sans Mono','Liberation Mono',monospace;left:416.80px;top:448.60px;height:13.2px;line-height:13.2px;font-size:10.63px;color:#d2d2d2;">: Compiling...</span>
<div class="abs" style="left:339.300px;top:461.60px;width:38.800px;height:12.80px;background:#4db873"></div>
<span class="t" style="font-family:'DejaVu Sans Mono','Liberation Mono',monospace;left:346.40px;top:461.80px;height:13.2px;line-height:13.2px;font-size:10.63px;color:#1e1e1e;">DONE</span>
<span class="t" style="font-family:'DejaVu Sans Mono','Liberation Mono',monospace;left:384.80px;top:461.80px;height:13.2px;line-height:13.2px;font-size:10.63px;color:#4db873;">Compiled successfully in 26ms</span>
<span class="t" style="font-family:'DejaVu Sans Mono','Liberation Mono',monospace;left:659.68px;top:461.80px;height:13.2px;line-height:13.2px;font-size:10.63px;color:#6a6a6a;">3:57:58 PM</span>
<span class="t" style="font-family:'DejaVu Sans Mono','Liberation Mono',monospace;left:340.00px;top:488.20px;height:13.2px;line-height:13.2px;font-size:10.63px;color:#3b82c4;">info</span><span class="t" style="font-family:'DejaVu Sans Mono','Liberation Mono',monospace;left:372.00px;top:488.20px;height:13.2px;line-height:13.2px;font-size:10.63px;color:#3b82c4;font-weight:bold;transform:scaleY(0.820);transform-origin:50% 78%">ℹ</span><span class="t" style="font-family:'DejaVu Sans Mono','Liberation Mono',monospace;left:384.80px;top:488.20px;height:13.2px;line-height:13.2px;font-size:10.63px;color:#6b6b6b;transform:scaleY(1.350);transform-origin:50% 40%">｢</span><span class="t" style="font-family:'DejaVu Sans Mono','Liberation Mono',monospace;left:391.20px;top:488.20px;height:13.2px;line-height:13.2px;font-size:10.63px;color:#6b6b6b;">wdm</span><span class="t" style="font-family:'DejaVu Sans Mono','Liberation Mono',monospace;left:410.40px;top:488.20px;height:13.2px;line-height:13.2px;font-size:10.63px;color:#6b6b6b;transform:scaleY(1.350);transform-origin:50% 78%">｣</span><span class="t" style="font-family:'DejaVu Sans Mono','Liberation Mono',monospace;left:416.80px;top:488.20px;height:13.2px;line-height:13.2px;font-size:10.63px;color:#d2d2d2;">:</span>
<span class="t" style="font-family:'DejaVu Sans Mono','Liberation Mono',monospace;left:340.00px;top:501.40px;height:13.2px;line-height:13.2px;font-size:10.63px;color:#3b82c4;">info</span><span class="t" style="font-family:'DejaVu Sans Mono','Liberation Mono',monospace;left:372.00px;top:501.40px;height:13.2px;line-height:13.2px;font-size:10.63px;color:#3b82c4;font-weight:bold;transform:scaleY(0.820);transform-origin:50% 78%">ℹ</span><span class="t" style="font-family:'DejaVu Sans Mono','Liberation Mono',monospace;left:384.80px;top:501.40px;height:13.2px;line-height:13.2px;font-size:10.63px;color:#6b6b6b;transform:scaleY(1.350);transform-origin:50% 40%">｢</span><span class="t" style="font-family:'DejaVu Sans Mono','Liberation Mono',monospace;left:391.20px;top:501.40px;height:13.2px;line-height:13.2px;font-size:10.63px;color:#6b6b6b;">wdm</span><span class="t" style="font-family:'DejaVu Sans Mono','Liberation Mono',monospace;left:410.40px;top:501.40px;height:13.2px;line-height:13.2px;font-size:10.63px;color:#6b6b6b;transform:scaleY(1.350);transform-origin:50% 78%">｣</span><span class="t" style="font-family:'DejaVu Sans Mono','Liberation Mono',monospace;left:416.80px;top:501.40px;height:13.2px;line-height:13.2px;font-size:10.63px;color:#d2d2d2;">: Compiled successfully.</span>
<span class="t" style="font-family:'DejaVu Sans Mono','Liberation Mono',monospace;left:340.00px;top:527.80px;height:13.2px;line-height:13.2px;font-size:10.63px;color:#b0b0b0;">&gt;</span>
<div id="status" class="abs"></div>
<svg style="left:11.500px;top:546.000px" width="8" height="12" viewBox="0 0 8 12" fill="none" stroke="#ffffff" stroke-width="1.100"><circle cx="1.900" cy="2" r="1.350"/><circle cx="1.900" cy="10" r="1.350"/><circle cx="6.100" cy="3.300" r="1.350"/><path d="M1.900 3.400 V8.600 M6.100 4.700 Q6.100 6.600 4 6.900 Q2.200 7.200 1.900 8.500"/></svg>
<span class="t" style="left:22.5px;top:544.8px;font-size:11.7px;line-height:15.2px;height:15.2px;letter-spacing:-0.206px;color:#ffffff;">master</span>
<svg style="left:72.300px;top:546.500px" width="11.400" height="11.400" viewBox="0 0 12 12" fill="none" stroke="#ffffff" stroke-width="1.500"><path d="M10.300 5.200 A4.400 4.400 0 0 0 2.700 3.100 M1.700 6.800 A4.400 4.400 0 0 0 9.300 8.900"/><path d="M0.800 1 L1.400 4.600 L4.800 3.600 Z M11.200 11 L10.600 7.400 L7.200 8.400 Z" fill="#ffffff" stroke="none"/></svg>
<span class="t" style="left:85.0px;top:544.8px;font-size:11.7px;line-height:15.2px;height:15.2px;letter-spacing:-0.316px;color:#ffffff;">0</span>
<svg style="left:92.500px;top:547.500px" width="6.400" height="9.500" viewBox="0 0 6.400 9.500" fill="none" stroke="#ffffff" stroke-width="1.100"><path d="M3.200 0.300 V8.700 M0.500 6 L3.200 8.800 L5.900 6"/></svg>
<span class="t" style="left:103.6px;top:544.8px;font-size:11.7px;line-height:15.2px;height:15.2px;color:#ffffff;">1</span>
<svg style="left:109.600px;top:547.500px" width="6.400" height="9.500" viewBox="0 0 6.400 9.500" fill="none" stroke="#ffffff" stroke-width="1.100"><path d="M3.200 9.200 V0.800 M0.500 3.500 L3.200 0.700 L5.900 3.500"/></svg>
<svg style="left:134.500px;top:546.100px" width="12.400" height="12.400" viewBox="0 0 12.400 12.400"><circle cx="6.200" cy="6.200" r="6" fill="#ffffff"/><path d="M3.700 3.700 L8.700 8.700 M8.700 3.700 L3.700 8.700" stroke="#2a7ad0" stroke-width="1.700" stroke-linecap="round"/></svg>
<span class="t" style="left:150.0px;top:544.8px;font-size:11.7px;line-height:15.2px;height:15.2px;letter-spacing:-0.316px;color:#ffffff;">0</span>
<svg style="left:160px;top:546.000px" width="12.800" height="12" viewBox="0 0 12.800 12"><path d="M6.400 0.400 L12.500 11.600 H0.300 Z" fill="#ffffff"/><path d="M6.400 4.300 V8 M6.400 9.300 V10.500" stroke="#2a7ad0" stroke-width="1.500"/></svg>
<span class="t" style="left:175.0px;top:544.8px;font-size:11.7px;line-height:15.2px;height:15.2px;letter-spacing:-0.316px;color:#ffffff;">0</span>
<svg style="left:197.200px;top:545.500px" width="12.600" height="12.600" viewBox="0 0 12.600 12.600" fill="none" stroke="#ffffff" stroke-linecap="round"><path d="M3 3 L10.800 10.800" stroke-width="2"/><circle cx="2.700" cy="2.700" r="2.200" fill="#ffffff" stroke="none"/><path d="M0.200 0.200 L2.500 2.500" stroke="#2a7ad0" stroke-width="1.400" stroke-linecap="butt"/><path d="M11.700 0.900 L6.700 5.900" stroke-width="1.150"/><path d="M5.300 7.300 L1.900 10.700" stroke-width="2.300"/></svg>
<span class="t" style="left:212.6px;top:544.8px;font-size:11.7px;line-height:15.2px;height:15.2px;letter-spacing:-2.316px;color:#ffffff;">1</span>
<svg style="left:231px;top:546.300px" width="12" height="12" viewBox="0 0 12 12"><circle cx="6" cy="6" r="5.800" fill="#ffffff"/><path d="M4.500 3.200 L9 6 L4.500 8.800 Z" fill="#2a7ad0"/></svg>
<span class="t" style="left:246.0px;top:544.8px;font-size:11.7px;line-height:15.2px;height:15.2px;letter-spacing:-0.154px;color:#ffffff;">Gatsby Develop (gatsby-graphql-app)</span>
<span class="t" style="left:565.4px;top:544.8px;font-size:11.7px;line-height:15.2px;height:15.2px;letter-spacing:-0.444px;color:#ffffff;">Ln 6, Col 21</span>
<span class="t" style="left:638.3px;top:544.8px;font-size:11.7px;line-height:15.2px;height:15.2px;letter-spacing:-0.376px;color:#ffffff;">Spaces: 2</span>
<span class="t" style="left:702.4px;top:544.8px;font-size:11.7px;line-height:15.2px;height:15.2px;letter-spacing:-0.205px;color:#ffffff;">UTF-8</span>
<span class="t" style="left:749.3px;top:544.8px;font-size:11.7px;line-height:15.2px;height:15.2px;letter-spacing:-0.520px;color:#ffffff;">LF</span>
<span class="t" style="left:776.7px;top:544.8px;font-size:11.7px;line-height:15.2px;height:15.2px;letter-spacing:-0.268px;color:#ffffff;">JavaScript</span>
<svg style="left:844.300px;top:546.300px" width="11.600" height="11.600" viewBox="0 0 11.600 11.600"><circle cx="5.800" cy="5.800" r="5.700" fill="#ffffff"/><circle cx="3.900" cy="4.400" r="0.900" fill="#2a7ad0"/><circle cx="7.700" cy="4.400" r="0.900" fill="#2a7ad0"/><path d="M2.700 6.600 Q5.800 10.600 8.900 6.600 Z" fill="#2a7ad0"/></svg>
<svg style="left:870.800px;top:546.000px" width="11.400" height="12.200" viewBox="0 0 11.400 12.200" fill="#ffffff"><path d="M5.700 0.300 Q6.600 0.300 6.700 1.300 Q9.400 2.200 9.400 5.400 Q9.400 8.300 11.100 9.700 V10.300 H0.300 V9.700 Q2 8.300 2 5.400 Q2 2.200 4.700 1.300 Q4.800 0.300 5.700 0.300 Z M4.400 10.900 H7 Q6.800 12 5.700 12 Q4.600 12 4.400 10.900Z"/></svg>
</body></html>
